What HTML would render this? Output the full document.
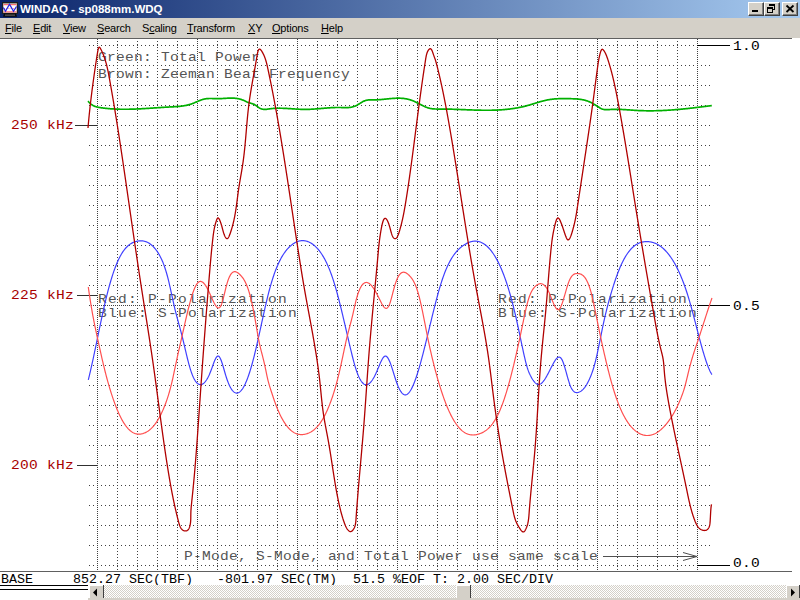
<!DOCTYPE html>
<html><head><meta charset="utf-8">
<style>
html,body{margin:0;padding:0;width:800px;height:600px;overflow:hidden;background:#fff;}
body{position:relative;font-family:"Liberation Sans",sans-serif;}
#title{position:absolute;left:0;top:0;width:800px;height:18px;background:linear-gradient(to right,#0a246a,#a6caf0);}
#title .t{position:absolute;left:20px;top:2px;color:#fff;font-weight:bold;font-size:11.5px;line-height:14px;white-space:nowrap;}
.btn{position:absolute;top:2px;width:16px;height:14px;background:#d4d0c8;box-sizing:border-box;border-top:1px solid #fff;border-left:1px solid #fff;border-right:1px solid #404040;border-bottom:1px solid #404040;box-shadow:inset -1px -1px 0 #808080;}
#menu{position:absolute;left:0;top:18px;width:800px;height:20px;background:#d4d0c8;}
#menu span{position:absolute;top:4px;font-size:11px;line-height:13px;color:#000;white-space:nowrap;letter-spacing:-0.2px;}
#menu u{text-decoration:underline;text-underline-offset:1px;text-decoration-thickness:1px;}
svg{position:absolute;left:0;top:0;}
</style></head><body>
<div id="title">
<svg width="20" height="18" style="left:0;top:0"><rect x="2" y="2" width="16" height="12" fill="#202020"/><rect x="3" y="3" width="14" height="10" fill="#8a8878"/><rect x="3.5" y="3.8" width="13" height="8.7" fill="#fff"/><path d="M3.5 4.6H16.5M3.5 11.9H16.5" stroke="#ff7070" stroke-width="1.1"/><path d="M4 8.5H16" stroke="#ff8080" stroke-dasharray="1 1.2"/><polyline points="3.3,7.5 5.5,11.3 9.5,4.2 13.5,11.3 16.5,6.5" fill="none" stroke="#2828e8" stroke-width="1.3"/><path d="M3 16.8L4 13.5H16L17 16.8Z" fill="#080808"/><rect x="5" y="14.6" width="10" height="1" fill="#707070"/></svg>
<div class="t">WINDAQ - sp088mm.WDQ</div>
<div class="btn" style="left:748px"></div>
<div class="btn" style="left:764px"></div>
<div class="btn" style="left:782px"></div>
<svg width="800" height="18" style="left:0;top:0">
<rect x="752" y="10" width="6" height="2" fill="#000"/>
<g shape-rendering="crispEdges" fill="#000">
<rect x="769" y="4" width="6" height="2"/><rect x="774" y="4" width="1" height="6"/><rect x="773" y="9" width="2" height="1"/>
<rect x="767" y="7" width="6" height="2"/><rect x="767" y="7" width="1" height="6"/><rect x="772" y="7" width="1" height="6"/><rect x="767" y="12" width="6" height="1"/>
</g>
<path d="M786.5 5.5L793.5 12M793.5 5.5L786.5 12" stroke="#000" stroke-width="1.8"/>
</svg>
</div>
<div id="menu">
<span style="left:5px"><u>F</u>ile</span>
<span style="left:33px"><u>E</u>dit</span>
<span style="left:63px"><u>V</u>iew</span>
<span style="left:97px"><u>S</u>earch</span>
<span style="left:142px">S<u>c</u>aling</span>
<span style="left:187px"><u>T</u>ransform</span>
<span style="left:248px"><u>X</u>Y</span>
<span style="left:272px"><u>O</u>ptions</span>
<span style="left:321px"><u>H</u>elp</span>
</div>
<svg width="800" height="600" style="left:0;top:0" shape-rendering="crispEdges">
<rect x="0" y="38" width="792" height="1" fill="#606060"/>
<path d="M89 45.5H711 M89 65.5H711 M89 85.5H711 M89 105.5H711 M89 125.5H711 M89 145.5H711 M89 165.5H711 M89 185.5H711 M89 205.5H711 M89 225.5H711 M89 245.5H711 M89 265.5H711 M89 285.5H711 M89 325.5H711 M89 345.5H711 M89 365.5H711 M89 385.5H711 M89 405.5H711 M89 425.5H711 M89 445.5H711 M89 465.5H711 M89 485.5H711 M89 505.5H711 M89 525.5H711 M89 545.5H711 M89 565.5H711" stroke="#404040" stroke-width="1" stroke-dasharray="1 3" fill="none"/>
<path d="M89 305.5H697" stroke="#404040" stroke-width="1" stroke-dasharray="1 1" fill="none"/>
<path d="M97.5 39V571 M197.5 39V571 M297.5 39V571 M397.5 39V571 M497.5 39V571 M597.5 39V571 M697.5 39V571" stroke="#404040" stroke-width="1" stroke-dasharray="1 1" fill="none"/>
<path d="M117.5 41V571 M137.5 41V571 M157.5 41V571 M177.5 41V571 M217.5 41V571 M237.5 41V571 M257.5 41V571 M277.5 41V571 M317.5 41V571 M337.5 41V571 M357.5 41V571 M377.5 41V571 M417.5 41V571 M437.5 41V571 M457.5 41V571 M477.5 41V571 M517.5 41V571 M537.5 41V571 M557.5 41V571 M577.5 41V571 M617.5 41V571 M637.5 41V571 M657.5 41V571 M677.5 41V571" stroke="#404040" stroke-width="1" stroke-dasharray="1 2" fill="none"/>
<rect x="0" y="571" width="792" height="1" fill="#606060"/>
</svg>
<svg width="800" height="600" style="left:0;top:0">
<g font-family="Liberation Mono"><text transform="translate(98,61) scale(1.12,1)" font-size="13" letter-spacing="0.236" fill="#555555" xml:space="preserve">Green: Total Power</text>
<text transform="translate(98,78) scale(1.12,1)" font-size="13" letter-spacing="0.236" fill="#555555" xml:space="preserve">Brown: Zeeman Beat Frequency</text>
<text transform="translate(98,303) scale(1.12,1)" font-size="13" letter-spacing="1.129" fill="#555555" xml:space="preserve">Red: P-Polarization</text>
<text transform="translate(98,317) scale(1.12,1)" font-size="13" letter-spacing="1.129" fill="#555555" xml:space="preserve">Blue: S-Polarization</text>
<text transform="translate(498,303) scale(1.12,1)" font-size="13" letter-spacing="1.129" fill="#555555" xml:space="preserve">Red: P-Polarization</text>
<text transform="translate(498,317) scale(1.12,1)" font-size="13" letter-spacing="1.129" fill="#555555" xml:space="preserve">Blue: S-Polarization</text>
<text transform="translate(184,560) scale(1.12,1)" font-size="13" letter-spacing="0.236" fill="#555555" xml:space="preserve">P-Mode, S-Mode, and Total Power use same scale</text>
<text transform="translate(11,129) scale(1.12,1)" font-size="13" letter-spacing="0.236" fill="#a80000" xml:space="preserve">250 kHz</text>
<text transform="translate(11,299) scale(1.12,1)" font-size="13" letter-spacing="0.236" fill="#a80000" xml:space="preserve">225 kHz</text>
<text transform="translate(11,469) scale(1.12,1)" font-size="13" letter-spacing="0.236" fill="#a80000" xml:space="preserve">200 kHz</text>
<text transform="translate(733,50) scale(1.12,1)" font-size="13" letter-spacing="0.236" fill="#000" xml:space="preserve">1.0</text>
<text transform="translate(733,310) scale(1.12,1)" font-size="13" letter-spacing="0.236" fill="#000" xml:space="preserve">0.5</text>
<text transform="translate(733,567) scale(1.12,1)" font-size="13" letter-spacing="0.236" fill="#000" xml:space="preserve">0.0</text></g>
<g shape-rendering="crispEdges">
<rect x="75" y="125" width="22" height="1" fill="#303030"/>
<rect x="77" y="295" width="20" height="1" fill="#303030"/>
<rect x="77" y="465" width="20" height="1" fill="#303030"/>
<rect x="697" y="45" width="33" height="1" fill="#000"/>
<rect x="697" y="305" width="33" height="1" fill="#000"/>
<rect x="697" y="565" width="33" height="1" fill="#000"/>
<rect x="603" y="556" width="94" height="1" fill="#505050"/>
</g>
<path d="M683 552.5L697 556.5L683 560.5" stroke="#505050" fill="none"/>
<polyline points="88.00,101.14 88.50,101.72 89.00,102.25 89.50,102.76 90.00,103.22 90.50,103.66 91.00,104.07 91.50,104.44 92.00,104.79 92.50,105.11 93.00,105.40 93.50,105.67 94.00,105.92 94.50,106.14 95.00,106.35 95.50,106.53 96.00,106.70 96.50,106.85 97.00,106.99 97.50,107.12 98.00,107.23 98.50,107.34 99.00,107.43 99.50,107.52 100.00,107.60 100.50,107.67 101.00,107.75 101.50,107.82 102.00,107.89 102.50,107.95 103.00,108.02 103.50,108.08 104.00,108.14 104.50,108.20 105.00,108.26 105.50,108.31 106.00,108.37 106.50,108.42 107.00,108.47 107.50,108.52 108.00,108.57 108.50,108.61 109.00,108.66 109.50,108.70 110.00,108.74 110.50,108.78 111.00,108.81 111.50,108.85 112.00,108.88 112.50,108.91 113.00,108.95 113.50,108.97 114.00,109.00 114.50,109.03 115.00,109.05 115.50,109.08 116.00,109.10 116.50,109.12 117.00,109.14 117.50,109.16 118.00,109.17 118.50,109.19 119.00,109.20 119.50,109.21 120.00,109.23 120.50,109.24 121.00,109.24 121.50,109.25 122.00,109.26 122.50,109.26 123.00,109.27 123.50,109.27 124.00,109.27 124.50,109.27 125.00,109.27 125.50,109.27 126.00,109.27 126.50,109.26 127.00,109.26 127.50,109.25 128.00,109.25 128.50,109.24 129.00,109.23 129.50,109.22 130.00,109.21 130.50,109.20 131.00,109.19 131.50,109.17 132.00,109.16 132.50,109.14 133.00,109.13 133.50,109.11 134.00,109.09 134.50,109.08 135.00,109.06 135.50,109.04 136.00,109.02 136.50,109.00 137.00,108.97 137.50,108.95 138.00,108.93 138.50,108.91 139.00,108.88 139.50,108.86 140.00,108.83 140.50,108.81 141.00,108.78 141.50,108.75 142.00,108.72 142.50,108.70 143.00,108.67 143.50,108.64 144.00,108.61 144.50,108.58 145.00,108.55 145.50,108.52 146.00,108.49 146.50,108.46 147.00,108.43 147.50,108.40 148.00,108.36 148.50,108.33 149.00,108.30 149.50,108.27 150.00,108.23 150.50,108.20 151.00,108.17 151.50,108.13 152.00,108.10 152.50,108.07 153.00,108.03 153.50,108.00 154.00,107.97 154.50,107.93 155.00,107.90 155.50,107.86 156.00,107.83 156.50,107.80 157.00,107.76 157.50,107.73 158.00,107.70 158.50,107.66 159.00,107.63 159.50,107.60 160.00,107.56 160.50,107.53 161.00,107.50 161.50,107.46 162.00,107.43 162.50,107.40 163.00,107.37 163.50,107.34 164.00,107.30 164.50,107.27 165.00,107.24 165.50,107.21 166.00,107.18 166.50,107.15 167.00,107.12 167.50,107.10 168.00,107.07 168.50,107.04 169.00,107.01 169.50,106.99 170.00,106.96 170.50,106.93 171.00,106.91 171.50,106.88 172.00,106.86 172.50,106.83 173.00,106.81 173.50,106.78 174.00,106.75 174.50,106.72 175.00,106.69 175.50,106.66 176.00,106.63 176.50,106.60 177.00,106.56 177.50,106.53 178.00,106.49 178.50,106.44 179.00,106.40 179.50,106.35 180.00,106.30 180.50,106.25 181.00,106.19 181.50,106.13 182.00,106.07 182.50,106.00 183.00,105.93 183.50,105.85 184.00,105.77 184.50,105.69 185.00,105.60 185.50,105.50 186.00,105.40 186.50,105.30 187.00,105.19 187.50,105.07 188.00,104.95 188.50,104.82 189.00,104.69 189.50,104.55 190.00,104.40 190.50,104.24 191.00,104.08 191.50,103.92 192.00,103.74 192.50,103.56 193.00,103.37 193.50,103.17 194.00,102.97 194.50,102.76 195.00,102.55 195.50,102.33 196.00,102.12 196.50,101.90 197.00,101.68 197.50,101.46 198.00,101.25 198.50,101.03 199.00,100.82 199.50,100.62 200.00,100.42 200.50,100.22 201.00,100.04 201.50,99.86 202.00,99.69 202.50,99.53 203.00,99.38 203.50,99.24 204.00,99.12 204.50,99.01 205.00,98.91 205.50,98.82 206.00,98.75 206.50,98.68 207.00,98.63 207.50,98.59 208.00,98.55 208.50,98.53 209.00,98.51 209.50,98.50 210.00,98.49 210.50,98.49 211.00,98.49 211.50,98.50 212.00,98.51 212.50,98.53 213.00,98.55 213.50,98.56 214.00,98.58 214.50,98.60 215.00,98.62 215.50,98.64 216.00,98.65 216.50,98.66 217.00,98.67 217.50,98.68 218.00,98.68 218.50,98.67 219.00,98.66 219.50,98.65 220.00,98.63 220.50,98.61 221.00,98.59 221.50,98.57 222.00,98.54 222.50,98.51 223.00,98.49 223.50,98.45 224.00,98.42 224.50,98.39 225.00,98.36 225.50,98.33 226.00,98.30 226.50,98.27 227.00,98.24 227.50,98.22 228.00,98.19 228.50,98.17 229.00,98.15 229.50,98.14 230.00,98.12 230.50,98.12 231.00,98.11 231.50,98.11 232.00,98.12 232.50,98.13 233.00,98.14 233.50,98.16 234.00,98.19 234.50,98.22 235.00,98.26 235.50,98.31 236.00,98.37 236.50,98.43 237.00,98.50 237.50,98.58 238.00,98.67 238.50,98.77 239.00,98.88 239.50,98.99 240.00,99.12 240.50,99.26 241.00,99.41 241.50,99.57 242.00,99.74 242.50,99.93 243.00,100.12 243.50,100.33 244.00,100.55 244.50,100.79 245.00,101.03 245.50,101.28 246.00,101.52 246.50,101.76 247.00,101.99 247.50,102.20 248.00,102.39 248.50,102.57 249.00,102.73 249.50,102.88 250.00,103.02 250.50,103.16 251.00,103.31 251.50,103.45 252.00,103.60 252.50,103.77 253.00,103.95 253.50,104.15 254.00,104.37 254.50,104.61 255.00,104.89 255.50,105.20 256.00,105.53 256.50,105.88 257.00,106.24 257.50,106.61 258.00,106.98 258.50,107.33 259.00,107.67 259.50,107.98 260.00,108.27 260.50,108.52 261.00,108.73 261.50,108.90 262.00,109.05 262.50,109.17 263.00,109.25 263.50,109.32 264.00,109.36 264.50,109.38 265.00,109.38 265.50,109.36 266.00,109.33 266.50,109.29 267.00,109.23 267.50,109.17 268.00,109.10 268.50,109.03 269.00,108.96 269.50,108.88 270.00,108.81 270.50,108.75 271.00,108.68 271.50,108.63 272.00,108.57 272.50,108.52 273.00,108.48 273.50,108.44 274.00,108.40 274.50,108.37 275.00,108.34 275.50,108.31 276.00,108.29 276.50,108.27 277.00,108.26 277.50,108.24 278.00,108.23 278.50,108.23 279.00,108.22 279.50,108.22 280.00,108.22 280.50,108.23 281.00,108.23 281.50,108.24 282.00,108.25 282.50,108.27 283.00,108.28 283.50,108.30 284.00,108.32 284.50,108.34 285.00,108.36 285.50,108.39 286.00,108.41 286.50,108.44 287.00,108.47 287.50,108.50 288.00,108.53 288.50,108.56 289.00,108.59 289.50,108.62 290.00,108.65 290.50,108.69 291.00,108.72 291.50,108.75 292.00,108.79 292.50,108.82 293.00,108.86 293.50,108.89 294.00,108.93 294.50,108.96 295.00,108.99 295.50,109.02 296.00,109.06 296.50,109.09 297.00,109.12 297.50,109.15 298.00,109.17 298.50,109.20 299.00,109.23 299.50,109.25 300.00,109.27 300.50,109.29 301.00,109.31 301.50,109.33 302.00,109.35 302.50,109.36 303.00,109.37 303.50,109.38 304.00,109.39 304.50,109.39 305.00,109.40 305.50,109.39 306.00,109.39 306.50,109.39 307.00,109.38 307.50,109.37 308.00,109.36 308.50,109.34 309.00,109.32 309.50,109.30 310.00,109.28 310.50,109.26 311.00,109.24 311.50,109.21 312.00,109.18 312.50,109.15 313.00,109.12 313.50,109.09 314.00,109.06 314.50,109.02 315.00,108.99 315.50,108.95 316.00,108.91 316.50,108.87 317.00,108.83 317.50,108.79 318.00,108.75 318.50,108.71 319.00,108.67 319.50,108.63 320.00,108.58 320.50,108.54 321.00,108.50 321.50,108.46 322.00,108.41 322.50,108.37 323.00,108.33 323.50,108.28 324.00,108.24 324.50,108.20 325.00,108.16 325.50,108.11 326.00,108.07 326.50,108.03 327.00,107.99 327.50,107.96 328.00,107.92 328.50,107.88 329.00,107.85 329.50,107.81 330.00,107.78 330.50,107.75 331.00,107.72 331.50,107.69 332.00,107.66 332.50,107.64 333.00,107.61 333.50,107.59 334.00,107.57 334.50,107.55 335.00,107.53 335.50,107.52 336.00,107.51 336.50,107.50 337.00,107.49 337.50,107.49 338.00,107.48 338.50,107.48 339.00,107.49 339.50,107.49 340.00,107.50 340.50,107.51 341.00,107.52 341.50,107.54 342.00,107.55 342.50,107.57 343.00,107.59 343.50,107.60 344.00,107.61 344.50,107.62 345.00,107.63 345.50,107.63 346.00,107.63 346.50,107.63 347.00,107.61 347.50,107.60 348.00,107.57 348.50,107.54 349.00,107.50 349.50,107.44 350.00,107.38 350.50,107.31 351.00,107.23 351.50,107.14 352.00,107.03 352.50,106.91 353.00,106.78 353.50,106.63 354.00,106.47 354.50,106.29 355.00,106.09 355.50,105.88 356.00,105.65 356.50,105.40 357.00,105.14 357.50,104.86 358.00,104.57 358.50,104.27 359.00,103.97 359.50,103.66 360.00,103.35 360.50,103.04 361.00,102.74 361.50,102.44 362.00,102.14 362.50,101.86 363.00,101.59 363.50,101.34 364.00,101.10 364.50,100.89 365.00,100.69 365.50,100.52 366.00,100.38 366.50,100.25 367.00,100.15 367.50,100.06 368.00,99.99 368.50,99.94 369.00,99.90 369.50,99.87 370.00,99.85 370.50,99.84 371.00,99.83 371.50,99.84 372.00,99.84 372.50,99.85 373.00,99.86 373.50,99.86 374.00,99.87 374.50,99.87 375.00,99.86 375.50,99.86 376.00,99.84 376.50,99.83 377.00,99.81 377.50,99.79 378.00,99.76 378.50,99.73 379.00,99.70 379.50,99.66 380.00,99.63 380.50,99.59 381.00,99.55 381.50,99.50 382.00,99.46 382.50,99.41 383.00,99.36 383.50,99.32 384.00,99.27 384.50,99.22 385.00,99.16 385.50,99.11 386.00,99.06 386.50,99.01 387.00,98.96 387.50,98.90 388.00,98.85 388.50,98.80 389.00,98.75 389.50,98.70 390.00,98.65 390.50,98.61 391.00,98.56 391.50,98.52 392.00,98.48 392.50,98.44 393.00,98.40 393.50,98.37 394.00,98.33 394.50,98.30 395.00,98.28 395.50,98.26 396.00,98.24 396.50,98.22 397.00,98.21 397.50,98.20 398.00,98.19 398.50,98.19 399.00,98.20 399.50,98.20 400.00,98.22 400.50,98.24 401.00,98.26 401.50,98.29 402.00,98.32 402.50,98.36 403.00,98.41 403.50,98.46 404.00,98.52 404.50,98.58 405.00,98.65 405.50,98.73 406.00,98.82 406.50,98.91 407.00,99.01 407.50,99.11 408.00,99.23 408.50,99.35 409.00,99.48 409.50,99.62 410.00,99.77 410.50,99.92 411.00,100.09 411.50,100.26 412.00,100.44 412.50,100.63 413.00,100.83 413.50,101.04 414.00,101.26 414.50,101.49 415.00,101.72 415.50,101.96 416.00,102.20 416.50,102.45 417.00,102.70 417.50,102.95 418.00,103.21 418.50,103.47 419.00,103.73 419.50,103.99 420.00,104.26 420.50,104.52 421.00,104.77 421.50,105.03 422.00,105.28 422.50,105.53 423.00,105.78 423.50,106.02 424.00,106.26 424.50,106.48 425.00,106.71 425.50,106.92 426.00,107.13 426.50,107.32 427.00,107.51 427.50,107.69 428.00,107.85 428.50,108.00 429.00,108.14 429.50,108.27 430.00,108.39 430.50,108.49 431.00,108.58 431.50,108.66 432.00,108.73 432.50,108.79 433.00,108.85 433.50,108.89 434.00,108.93 434.50,108.96 435.00,108.98 435.50,109.00 436.00,109.02 436.50,109.03 437.00,109.03 437.50,109.03 438.00,109.03 438.50,109.03 439.00,109.03 439.50,109.03 440.00,109.03 440.50,109.03 441.00,109.03 441.50,109.03 442.00,109.03 442.50,109.03 443.00,109.03 443.50,109.04 444.00,109.04 444.50,109.05 445.00,109.06 445.50,109.06 446.00,109.07 446.50,109.08 447.00,109.09 447.50,109.10 448.00,109.11 448.50,109.12 449.00,109.13 449.50,109.14 450.00,109.16 450.50,109.17 451.00,109.18 451.50,109.20 452.00,109.21 452.50,109.23 453.00,109.24 453.50,109.26 454.00,109.28 454.50,109.29 455.00,109.31 455.50,109.33 456.00,109.34 456.50,109.36 457.00,109.38 457.50,109.40 458.00,109.42 458.50,109.44 459.00,109.46 459.50,109.48 460.00,109.50 460.50,109.52 461.00,109.54 461.50,109.56 462.00,109.58 462.50,109.60 463.00,109.62 463.50,109.64 464.00,109.66 464.50,109.68 465.00,109.70 465.50,109.72 466.00,109.74 466.50,109.76 467.00,109.78 467.50,109.80 468.00,109.82 468.50,109.84 469.00,109.86 469.50,109.88 470.00,109.90 470.50,109.92 471.00,109.94 471.50,109.95 472.00,109.97 472.50,109.99 473.00,110.01 473.50,110.02 474.00,110.04 474.50,110.06 475.00,110.07 475.50,110.09 476.00,110.10 476.50,110.12 477.00,110.13 477.50,110.14 478.00,110.16 478.50,110.17 479.00,110.18 479.50,110.19 480.00,110.20 480.50,110.21 481.00,110.22 481.50,110.23 482.00,110.24 482.50,110.25 483.00,110.25 483.50,110.26 484.00,110.26 484.50,110.27 485.00,110.27 485.50,110.27 486.00,110.27 486.50,110.27 487.00,110.27 487.50,110.27 488.00,110.27 488.50,110.27 489.00,110.27 489.50,110.26 490.00,110.25 490.50,110.25 491.00,110.24 491.50,110.23 492.00,110.22 492.50,110.21 493.00,110.20 493.50,110.18 494.00,110.17 494.50,110.15 495.00,110.14 495.50,110.12 496.00,110.10 496.50,110.08 497.00,110.06 497.50,110.03 498.00,110.01 498.50,109.98 499.00,109.96 499.50,109.93 500.00,109.90 500.50,109.87 501.00,109.83 501.50,109.80 502.00,109.77 502.50,109.73 503.00,109.69 503.50,109.65 504.00,109.61 504.50,109.56 505.00,109.52 505.50,109.47 506.00,109.43 506.50,109.38 507.00,109.32 507.50,109.27 508.00,109.22 508.50,109.16 509.00,109.10 509.50,109.04 510.00,108.98 510.50,108.92 511.00,108.85 511.50,108.78 512.00,108.71 512.50,108.64 513.00,108.57 513.50,108.50 514.00,108.42 514.50,108.34 515.00,108.26 515.50,108.18 516.00,108.09 516.50,108.01 517.00,107.92 517.50,107.83 518.00,107.73 518.50,107.64 519.00,107.54 519.50,107.44 520.00,107.34 520.50,107.24 521.00,107.13 521.50,107.02 522.00,106.91 522.50,106.80 523.00,106.69 523.50,106.57 524.00,106.45 524.50,106.33 525.00,106.20 525.50,106.08 526.00,105.95 526.50,105.82 527.00,105.68 527.50,105.55 528.00,105.41 528.50,105.27 529.00,105.12 529.50,104.98 530.00,104.83 530.50,104.68 531.00,104.53 531.50,104.38 532.00,104.23 532.50,104.08 533.00,103.92 533.50,103.77 534.00,103.61 534.50,103.46 535.00,103.30 535.50,103.15 536.00,103.00 536.50,102.84 537.00,102.69 537.50,102.54 538.00,102.38 538.50,102.23 539.00,102.08 539.50,101.94 540.00,101.79 540.50,101.65 541.00,101.51 541.50,101.37 542.00,101.23 542.50,101.09 543.00,100.96 543.50,100.83 544.00,100.71 544.50,100.59 545.00,100.47 545.50,100.35 546.00,100.24 546.50,100.13 547.00,100.03 547.50,99.93 548.00,99.84 548.50,99.75 549.00,99.66 549.50,99.58 550.00,99.50 550.50,99.43 551.00,99.36 551.50,99.29 552.00,99.23 552.50,99.17 553.00,99.12 553.50,99.07 554.00,99.02 554.50,98.97 555.00,98.93 555.50,98.89 556.00,98.86 556.50,98.83 557.00,98.80 557.50,98.77 558.00,98.75 558.50,98.72 559.00,98.70 559.50,98.69 560.00,98.67 560.50,98.66 561.00,98.65 561.50,98.64 562.00,98.63 562.50,98.63 563.00,98.63 563.50,98.62 564.00,98.62 564.50,98.63 565.00,98.63 565.50,98.63 566.00,98.64 566.50,98.64 567.00,98.65 567.50,98.66 568.00,98.66 568.50,98.67 569.00,98.68 569.50,98.69 570.00,98.70 570.50,98.71 571.00,98.72 571.50,98.73 572.00,98.75 572.50,98.76 573.00,98.78 573.50,98.79 574.00,98.81 574.50,98.83 575.00,98.86 575.50,98.89 576.00,98.92 576.50,98.95 577.00,98.99 577.50,99.03 578.00,99.07 578.50,99.12 579.00,99.18 579.50,99.24 580.00,99.30 580.50,99.37 581.00,99.45 581.50,99.53 582.00,99.61 582.50,99.71 583.00,99.81 583.50,99.92 584.00,100.03 584.50,100.16 585.00,100.29 585.50,100.43 586.00,100.57 586.50,100.73 587.00,100.89 587.50,101.07 588.00,101.25 588.50,101.44 589.00,101.64 589.50,101.86 590.00,102.08 590.50,102.31 591.00,102.55 591.50,102.81 592.00,103.07 592.50,103.34 593.00,103.62 593.50,103.90 594.00,104.19 594.50,104.49 595.00,104.79 595.50,105.10 596.00,105.41 596.50,105.73 597.00,106.05 597.50,106.37 598.00,106.69 598.50,107.01 599.00,107.33 599.50,107.64 600.00,107.93 600.50,108.21 601.00,108.48 601.50,108.72 602.00,108.94 602.50,109.13 603.00,109.29 603.50,109.42 604.00,109.52 604.50,109.60 605.00,109.66 605.50,109.69 606.00,109.71 606.50,109.72 607.00,109.71 607.50,109.69 608.00,109.66 608.50,109.63 609.00,109.60 609.50,109.56 610.00,109.52 610.50,109.49 611.00,109.46 611.50,109.43 612.00,109.41 612.50,109.39 613.00,109.37 613.50,109.36 614.00,109.35 614.50,109.34 615.00,109.33 615.50,109.33 616.00,109.33 616.50,109.33 617.00,109.33 617.50,109.34 618.00,109.35 618.50,109.36 619.00,109.37 619.50,109.39 620.00,109.40 620.50,109.42 621.00,109.44 621.50,109.46 622.00,109.48 622.50,109.51 623.00,109.53 623.50,109.56 624.00,109.59 624.50,109.62 625.00,109.65 625.50,109.68 626.00,109.71 626.50,109.74 627.00,109.78 627.50,109.81 628.00,109.84 628.50,109.88 629.00,109.91 629.50,109.95 630.00,109.98 630.50,110.02 631.00,110.06 631.50,110.09 632.00,110.13 632.50,110.16 633.00,110.20 633.50,110.23 634.00,110.26 634.50,110.30 635.00,110.33 635.50,110.36 636.00,110.39 636.50,110.42 637.00,110.45 637.50,110.48 638.00,110.50 638.50,110.53 639.00,110.55 639.50,110.58 640.00,110.60 640.50,110.62 641.00,110.64 641.50,110.66 642.00,110.67 642.50,110.69 643.00,110.70 643.50,110.72 644.00,110.73 644.50,110.74 645.00,110.75 645.50,110.76 646.00,110.77 646.50,110.78 647.00,110.79 647.50,110.79 648.00,110.80 648.50,110.80 649.00,110.80 649.50,110.80 650.00,110.80 650.50,110.80 651.00,110.80 651.50,110.80 652.00,110.80 652.50,110.79 653.00,110.79 653.50,110.78 654.00,110.77 654.50,110.76 655.00,110.75 655.50,110.74 656.00,110.73 656.50,110.72 657.00,110.71 657.50,110.69 658.00,110.68 658.50,110.66 659.00,110.65 659.50,110.63 660.00,110.61 660.50,110.59 661.00,110.57 661.50,110.55 662.00,110.53 662.50,110.51 663.00,110.49 663.50,110.46 664.00,110.44 664.50,110.41 665.00,110.39 665.50,110.36 666.00,110.33 666.50,110.30 667.00,110.27 667.50,110.24 668.00,110.21 668.50,110.18 669.00,110.15 669.50,110.12 670.00,110.08 670.50,110.05 671.00,110.01 671.50,109.98 672.00,109.94 672.50,109.91 673.00,109.87 673.50,109.83 674.00,109.79 674.50,109.75 675.00,109.71 675.50,109.67 676.00,109.63 676.50,109.59 677.00,109.55 677.50,109.50 678.00,109.46 678.50,109.42 679.00,109.37 679.50,109.33 680.00,109.28 680.50,109.23 681.00,109.19 681.50,109.14 682.00,109.09 682.50,109.04 683.00,108.99 683.50,108.94 684.00,108.89 684.50,108.84 685.00,108.79 685.50,108.74 686.00,108.69 686.50,108.64 687.00,108.58 687.50,108.53 688.00,108.48 688.50,108.42 689.00,108.37 689.50,108.32 690.00,108.26 690.50,108.20 691.00,108.15 691.50,108.09 692.00,108.04 692.50,107.98 693.00,107.92 693.50,107.86 694.00,107.81 694.50,107.75 695.00,107.69 695.50,107.63 696.00,107.57 696.50,107.51 697.00,107.45 697.50,107.39 698.00,107.33 698.50,107.27 699.00,107.21 699.50,107.15 700.00,107.09 700.50,107.03 701.00,106.96 701.50,106.90 702.00,106.84 702.50,106.78 703.00,106.71 703.50,106.65 704.00,106.59 704.50,106.53 705.00,106.46 705.50,106.40 706.00,106.33 706.50,106.27 707.00,106.21 707.50,106.14 708.00,106.08 708.50,106.01 709.00,105.95 709.50,105.89 710.00,105.82 710.50,105.76 711.00,105.69 711.50,105.63 711.80,105.59" fill="none" stroke="#00b000" stroke-width="1.7" stroke-linejoin="round"/>
<polyline points="88.30,379.86 88.80,377.84 89.30,375.77 89.80,373.66 90.30,371.52 90.80,369.34 91.30,367.13 91.80,364.89 92.30,362.62 92.80,360.32 93.30,358.01 93.80,355.67 94.30,353.32 94.80,350.95 95.30,348.56 95.80,346.17 96.30,343.77 96.80,341.36 97.30,338.95 97.80,336.53 98.30,334.12 98.80,331.71 99.30,329.31 99.80,326.91 100.30,324.53 100.80,322.16 101.30,319.80 101.80,317.46 102.30,315.14 102.80,312.85 103.30,310.58 103.80,308.33 104.30,306.12 104.80,303.94 105.30,301.79 105.80,299.68 106.30,297.61 106.80,295.57 107.30,293.58 107.80,291.63 108.30,289.72 108.80,287.85 109.30,286.02 109.80,284.23 110.30,282.48 110.80,280.77 111.30,279.11 111.80,277.48 112.30,275.89 112.80,274.35 113.30,272.84 113.80,271.38 114.30,269.96 114.80,268.58 115.30,267.24 115.80,265.94 116.30,264.68 116.80,263.47 117.30,262.29 117.80,261.16 118.30,260.07 118.80,259.02 119.30,258.00 119.80,257.02 120.30,256.09 120.80,255.18 121.30,254.32 121.80,253.49 122.30,252.69 122.80,251.93 123.30,251.20 123.80,250.50 124.30,249.83 124.80,249.20 125.30,248.59 125.80,248.02 126.30,247.47 126.80,246.95 127.30,246.46 127.80,245.99 128.30,245.55 128.80,245.14 129.30,244.75 129.80,244.38 130.30,244.03 130.80,243.71 131.30,243.41 131.80,243.13 132.30,242.87 132.80,242.63 133.30,242.40 133.80,242.20 134.30,242.01 134.80,241.83 135.30,241.67 135.80,241.53 136.30,241.40 136.80,241.29 137.30,241.18 137.80,241.09 138.30,241.01 138.80,240.95 139.30,240.90 139.80,240.86 140.30,240.84 140.80,240.83 141.30,240.83 141.80,240.86 142.30,240.90 142.80,240.95 143.30,241.03 143.80,241.12 144.30,241.22 144.80,241.35 145.30,241.49 145.80,241.66 146.30,241.84 146.80,242.05 147.30,242.27 147.80,242.51 148.30,242.78 148.80,243.07 149.30,243.37 149.80,243.71 150.30,244.06 150.80,244.44 151.30,244.84 151.80,245.26 152.30,245.71 152.80,246.19 153.30,246.69 153.80,247.21 154.30,247.76 154.80,248.34 155.30,248.95 155.80,249.58 156.30,250.24 156.80,250.93 157.30,251.64 157.80,252.39 158.30,253.17 158.80,253.99 159.30,254.84 159.80,255.74 160.30,256.67 160.80,257.66 161.30,258.69 161.80,259.77 162.30,260.91 162.80,262.10 163.30,263.35 163.80,264.66 164.30,266.04 164.80,267.48 165.30,268.99 165.80,270.58 166.30,272.23 166.80,273.97 167.30,275.78 167.80,277.67 168.30,279.65 168.80,281.71 169.30,283.84 169.80,286.02 170.30,288.24 170.80,290.51 171.30,292.79 171.80,295.09 172.30,297.39 172.80,299.68 173.30,301.95 173.80,304.18 174.30,306.38 174.80,308.52 175.30,310.59 175.80,312.61 176.30,314.56 176.80,316.47 177.30,318.35 177.80,320.19 178.30,322.02 178.80,323.83 179.30,325.64 179.80,327.46 180.30,329.29 180.80,331.15 181.30,333.05 181.80,334.98 182.30,336.97 182.80,339.00 183.30,341.07 183.80,343.18 184.30,345.31 184.80,347.44 185.30,349.58 185.80,351.72 186.30,353.84 186.80,355.93 187.30,357.99 187.80,360.01 188.30,361.97 188.80,363.87 189.30,365.70 189.80,367.45 190.30,369.11 190.80,370.68 191.30,372.16 191.80,373.54 192.30,374.84 192.80,376.05 193.30,377.17 193.80,378.21 194.30,379.16 194.80,380.04 195.30,380.83 195.80,381.54 196.30,382.17 196.80,382.73 197.30,383.21 197.80,383.62 198.30,383.95 198.80,384.22 199.30,384.41 199.80,384.53 200.30,384.59 200.80,384.58 201.30,384.50 201.80,384.36 202.30,384.16 202.80,383.89 203.30,383.56 203.80,383.17 204.30,382.71 204.80,382.18 205.30,381.60 205.80,380.95 206.30,380.24 206.80,379.47 207.30,378.63 207.80,377.73 208.30,376.77 208.80,375.75 209.30,374.67 209.80,373.52 210.30,372.32 210.80,371.05 211.30,369.72 211.80,368.35 212.30,366.94 212.80,365.54 213.30,364.15 213.80,362.80 214.30,361.51 214.80,360.31 215.30,359.21 215.80,358.23 216.30,357.41 216.80,356.75 217.30,356.29 217.80,356.04 218.30,356.03 218.80,356.27 219.30,356.76 219.80,357.49 220.30,358.42 220.80,359.53 221.30,360.80 221.80,362.21 222.30,363.73 222.80,365.35 223.30,367.03 223.80,368.75 224.30,370.50 224.80,372.24 225.30,373.96 225.80,375.63 226.30,377.22 226.80,378.74 227.30,380.18 227.80,381.54 228.30,382.82 228.80,384.02 229.30,385.14 229.80,386.19 230.30,387.16 230.80,388.05 231.30,388.87 231.80,389.61 232.30,390.28 232.80,390.88 233.30,391.40 233.80,391.86 234.30,392.24 234.80,392.55 235.30,392.78 235.80,392.95 236.30,393.05 236.80,393.08 237.30,393.05 237.80,392.94 238.30,392.77 238.80,392.53 239.30,392.23 239.80,391.86 240.30,391.42 240.80,390.93 241.30,390.37 241.80,389.74 242.30,389.06 242.80,388.31 243.30,387.50 243.80,386.64 244.30,385.71 244.80,384.72 245.30,383.68 245.80,382.57 246.30,381.41 246.80,380.19 247.30,378.92 247.80,377.59 248.30,376.21 248.80,374.77 249.30,373.28 249.80,371.73 250.30,370.13 250.80,368.48 251.30,366.78 251.80,365.03 252.30,363.23 252.80,361.37 253.30,359.47 253.80,357.53 254.30,355.53 254.80,353.50 255.30,351.43 255.80,349.33 256.30,347.19 256.80,345.02 257.30,342.83 257.80,340.62 258.30,338.38 258.80,336.13 259.30,333.86 259.80,331.59 260.30,329.30 260.80,327.01 261.30,324.72 261.80,322.43 262.30,320.15 262.80,317.87 263.30,315.60 263.80,313.35 264.30,311.11 264.80,308.89 265.30,306.69 265.80,304.52 266.30,302.37 266.80,300.26 267.30,298.18 267.80,296.14 268.30,294.14 268.80,292.18 269.30,290.27 269.80,288.41 270.30,286.60 270.80,284.84 271.30,283.12 271.80,281.46 272.30,279.84 272.80,278.26 273.30,276.73 273.80,275.25 274.30,273.81 274.80,272.41 275.30,271.06 275.80,269.75 276.30,268.47 276.80,267.24 277.30,266.04 277.80,264.89 278.30,263.77 278.80,262.69 279.30,261.64 279.80,260.63 280.30,259.66 280.80,258.71 281.30,257.80 281.80,256.92 282.30,256.08 282.80,255.26 283.30,254.47 283.80,253.71 284.30,252.98 284.80,252.28 285.30,251.60 285.80,250.95 286.30,250.33 286.80,249.72 287.30,249.14 287.80,248.59 288.30,248.05 288.80,247.54 289.30,247.05 289.80,246.57 290.30,246.12 290.80,245.68 291.30,245.26 291.80,244.86 292.30,244.47 292.80,244.11 293.30,243.76 293.80,243.43 294.30,243.12 294.80,242.83 295.30,242.56 295.80,242.30 296.30,242.06 296.80,241.84 297.30,241.64 297.80,241.46 298.30,241.29 298.80,241.15 299.30,241.02 299.80,240.91 300.30,240.81 300.80,240.74 301.30,240.68 301.80,240.64 302.30,240.62 302.80,240.62 303.30,240.63 303.80,240.67 304.30,240.72 304.80,240.79 305.30,240.87 305.80,240.98 306.30,241.10 306.80,241.24 307.30,241.40 307.80,241.57 308.30,241.77 308.80,241.98 309.30,242.21 309.80,242.46 310.30,242.72 310.80,243.01 311.30,243.31 311.80,243.62 312.30,243.96 312.80,244.32 313.30,244.69 313.80,245.08 314.30,245.49 314.80,245.91 315.30,246.36 315.80,246.83 316.30,247.32 316.80,247.83 317.30,248.36 317.80,248.91 318.30,249.49 318.80,250.09 319.30,250.72 319.80,251.37 320.30,252.04 320.80,252.74 321.30,253.47 321.80,254.22 322.30,255.00 322.80,255.81 323.30,256.64 323.80,257.51 324.30,258.40 324.80,259.33 325.30,260.28 325.80,261.27 326.30,262.29 326.80,263.34 327.30,264.42 327.80,265.54 328.30,266.69 328.80,267.87 329.30,269.09 329.80,270.34 330.30,271.63 330.80,272.96 331.30,274.33 331.80,275.73 332.30,277.17 332.80,278.64 333.30,280.16 333.80,281.72 334.30,283.32 334.80,284.95 335.30,286.63 335.80,288.35 336.30,290.11 336.80,291.91 337.30,293.74 337.80,295.60 338.30,297.50 338.80,299.42 339.30,301.37 339.80,303.35 340.30,305.36 340.80,307.38 341.30,309.43 341.80,311.49 342.30,313.58 342.80,315.68 343.30,317.79 343.80,319.91 344.30,322.04 344.80,324.19 345.30,326.33 345.80,328.49 346.30,330.64 346.80,332.80 347.30,334.95 347.80,337.11 348.30,339.25 348.80,341.40 349.30,343.53 349.80,345.65 350.30,347.77 350.80,349.86 351.30,351.94 351.80,353.99 352.30,356.00 352.80,357.98 353.30,359.91 353.80,361.79 354.30,363.61 354.80,365.37 355.30,367.07 355.80,368.69 356.30,370.23 356.80,371.69 357.30,373.07 357.80,374.36 358.30,375.58 358.80,376.72 359.30,377.78 359.80,378.77 360.30,379.67 360.80,380.50 361.30,381.25 361.80,381.93 362.30,382.54 362.80,383.06 363.30,383.52 363.80,383.90 364.30,384.21 364.80,384.45 365.30,384.62 365.80,384.71 366.30,384.74 366.80,384.70 367.30,384.58 367.80,384.41 368.30,384.16 368.80,383.86 369.30,383.49 369.80,383.06 370.30,382.57 370.80,382.02 371.30,381.42 371.80,380.76 372.30,380.04 372.80,379.28 373.30,378.46 373.80,377.60 374.30,376.69 374.80,375.73 375.30,374.72 375.80,373.68 376.30,372.59 376.80,371.46 377.30,370.29 377.80,369.09 378.30,367.87 378.80,366.65 379.30,365.44 379.80,364.24 380.30,363.08 380.80,361.96 381.30,360.90 381.80,359.92 382.30,359.01 382.80,358.21 383.30,357.51 383.80,356.93 384.30,356.49 384.80,356.20 385.30,356.07 385.80,356.10 386.30,356.31 386.80,356.69 387.30,357.21 387.80,357.89 388.30,358.69 388.80,359.62 389.30,360.67 389.80,361.82 390.30,363.07 390.80,364.41 391.30,365.83 391.80,367.32 392.30,368.86 392.80,370.45 393.30,372.07 393.80,373.71 394.30,375.34 394.80,376.96 395.30,378.55 395.80,380.08 396.30,381.55 396.80,382.96 397.30,384.28 397.80,385.54 398.30,386.72 398.80,387.82 399.30,388.85 399.80,389.80 400.30,390.68 400.80,391.47 401.30,392.18 401.80,392.82 402.30,393.37 402.80,393.83 403.30,394.22 403.80,394.52 404.30,394.73 404.80,394.86 405.30,394.89 405.80,394.85 406.30,394.71 406.80,394.49 407.30,394.20 407.80,393.82 408.30,393.36 408.80,392.83 409.30,392.22 409.80,391.54 410.30,390.79 410.80,389.98 411.30,389.09 411.80,388.14 412.30,387.13 412.80,386.05 413.30,384.92 413.80,383.73 414.30,382.48 414.80,381.18 415.30,379.83 415.80,378.43 416.30,376.97 416.80,375.48 417.30,373.93 417.80,372.35 418.30,370.72 418.80,369.06 419.30,367.36 419.80,365.62 420.30,363.85 420.80,362.04 421.30,360.21 421.80,358.35 422.30,356.46 422.80,354.55 423.30,352.61 423.80,350.66 424.30,348.68 424.80,346.69 425.30,344.69 425.80,342.67 426.30,340.63 426.80,338.59 427.30,336.54 427.80,334.48 428.30,332.42 428.80,330.35 429.30,328.28 429.80,326.22 430.30,324.15 430.80,322.09 431.30,320.03 431.80,317.98 432.30,315.93 432.80,313.90 433.30,311.88 433.80,309.87 434.30,307.88 434.80,305.91 435.30,303.95 435.80,302.02 436.30,300.11 436.80,298.22 437.30,296.35 437.80,294.52 438.30,292.71 438.80,290.93 439.30,289.19 439.80,287.48 440.30,285.80 440.80,284.17 441.30,282.57 441.80,281.01 442.30,279.50 442.80,278.03 443.30,276.60 443.80,275.21 444.30,273.87 444.80,272.56 445.30,271.29 445.80,270.06 446.30,268.87 446.80,267.72 447.30,266.60 447.80,265.52 448.30,264.47 448.80,263.46 449.30,262.48 449.80,261.53 450.30,260.61 450.80,259.73 451.30,258.87 451.80,258.05 452.30,257.25 452.80,256.48 453.30,255.74 453.80,255.02 454.30,254.33 454.80,253.67 455.30,253.03 455.80,252.41 456.30,251.82 456.80,251.25 457.30,250.70 457.80,250.17 458.30,249.66 458.80,249.17 459.30,248.70 459.80,248.24 460.30,247.80 460.80,247.38 461.30,246.98 461.80,246.58 462.30,246.21 462.80,245.84 463.30,245.49 463.80,245.15 464.30,244.82 464.80,244.51 465.30,244.20 465.80,243.91 466.30,243.64 466.80,243.38 467.30,243.13 467.80,242.89 468.30,242.67 468.80,242.46 469.30,242.27 469.80,242.09 470.30,241.93 470.80,241.78 471.30,241.64 471.80,241.53 472.30,241.42 472.80,241.34 473.30,241.27 473.80,241.21 474.30,241.17 474.80,241.15 475.30,241.14 475.80,241.16 476.30,241.18 476.80,241.23 477.30,241.29 477.80,241.37 478.30,241.47 478.80,241.59 479.30,241.73 479.80,241.88 480.30,242.05 480.80,242.24 481.30,242.45 481.80,242.68 482.30,242.93 482.80,243.20 483.30,243.49 483.80,243.80 484.30,244.13 484.80,244.47 485.30,244.84 485.80,245.23 486.30,245.65 486.80,246.08 487.30,246.53 487.80,247.01 488.30,247.50 488.80,248.02 489.30,248.57 489.80,249.13 490.30,249.72 490.80,250.32 491.30,250.96 491.80,251.61 492.30,252.29 492.80,252.99 493.30,253.72 493.80,254.47 494.30,255.24 494.80,256.04 495.30,256.86 495.80,257.71 496.30,258.59 496.80,259.49 497.30,260.41 497.80,261.36 498.30,262.34 498.80,263.35 499.30,264.39 499.80,265.45 500.30,266.54 500.80,267.67 501.30,268.82 501.80,270.00 502.30,271.21 502.80,272.45 503.30,273.72 503.80,275.03 504.30,276.37 504.80,277.73 505.30,279.13 505.80,280.57 506.30,282.04 506.80,283.54 507.30,285.07 507.80,286.64 508.30,288.25 508.80,289.89 509.30,291.56 509.80,293.27 510.30,295.02 510.80,296.80 511.30,298.62 511.80,300.48 512.30,302.37 512.80,304.30 513.30,306.26 513.80,308.27 514.30,310.30 514.80,312.38 515.30,314.49 515.80,316.65 516.30,318.83 516.80,321.06 517.30,323.32 517.80,325.62 518.30,327.95 518.80,330.30 519.30,332.67 519.80,335.05 520.30,337.43 520.80,339.82 521.30,342.19 521.80,344.56 522.30,346.91 522.80,349.24 523.30,351.54 523.80,353.80 524.30,356.02 524.80,358.19 525.30,360.29 525.80,362.31 526.30,364.23 526.80,366.02 527.30,367.69 527.80,369.23 528.30,370.64 528.80,371.94 529.30,373.15 529.80,374.27 530.30,375.32 530.80,376.30 531.30,377.23 531.80,378.12 532.30,378.96 532.80,379.74 533.30,380.47 533.80,381.15 534.30,381.77 534.80,382.33 535.30,382.83 535.80,383.27 536.30,383.64 536.80,383.95 537.30,384.18 537.80,384.35 538.30,384.44 538.80,384.46 539.30,384.41 539.80,384.27 540.30,384.06 540.80,383.77 541.30,383.42 541.80,383.00 542.30,382.52 542.80,381.97 543.30,381.38 543.80,380.73 544.30,380.03 544.80,379.29 545.30,378.52 545.80,377.70 546.30,376.85 546.80,375.97 547.30,375.07 547.80,374.14 548.30,373.20 548.80,372.24 549.30,371.27 549.80,370.29 550.30,369.31 550.80,368.33 551.30,367.35 551.80,366.38 552.30,365.42 552.80,364.48 553.30,363.55 553.80,362.65 554.30,361.78 554.80,360.96 555.30,360.19 555.80,359.49 556.30,358.86 556.80,358.31 557.30,357.85 557.80,357.49 558.30,357.24 558.80,357.11 559.30,357.11 559.80,357.25 560.30,357.53 560.80,357.97 561.30,358.58 561.80,359.36 562.30,360.33 562.80,361.47 563.30,362.77 563.80,364.20 564.30,365.75 564.80,367.39 565.30,369.11 565.80,370.88 566.30,372.68 566.80,374.49 567.30,376.29 567.80,378.06 568.30,379.78 568.80,381.43 569.30,382.98 569.80,384.43 570.30,385.74 570.80,386.91 571.30,387.95 571.80,388.87 572.30,389.67 572.80,390.36 573.30,390.94 573.80,391.42 574.30,391.81 574.80,392.12 575.30,392.35 575.80,392.50 576.30,392.59 576.80,392.61 577.30,392.59 577.80,392.51 578.30,392.40 578.80,392.24 579.30,392.05 579.80,391.82 580.30,391.55 580.80,391.24 581.30,390.90 581.80,390.50 582.30,390.07 582.80,389.60 583.30,389.08 583.80,388.52 584.30,387.92 584.80,387.28 585.30,386.59 585.80,385.85 586.30,385.07 586.80,384.25 587.30,383.38 587.80,382.46 588.30,381.50 588.80,380.49 589.30,379.43 589.80,378.32 590.30,377.17 590.80,375.96 591.30,374.70 591.80,373.37 592.30,371.97 592.80,370.50 593.30,368.95 593.80,367.32 594.30,365.59 594.80,363.77 595.30,361.85 595.80,359.83 596.30,357.72 596.80,355.53 597.30,353.27 597.80,350.95 598.30,348.59 598.80,346.17 599.30,343.73 599.80,341.26 600.30,338.78 600.80,336.30 601.30,333.82 601.80,331.35 602.30,328.91 602.80,326.50 603.30,324.13 603.80,321.82 604.30,319.56 604.80,317.35 605.30,315.19 605.80,313.08 606.30,311.02 606.80,309.00 607.30,307.03 607.80,305.10 608.30,303.20 608.80,301.35 609.30,299.53 609.80,297.75 610.30,296.00 610.80,294.29 611.30,292.60 611.80,290.94 612.30,289.30 612.80,287.69 613.30,286.10 613.80,284.54 614.30,283.00 614.80,281.49 615.30,280.01 615.80,278.55 616.30,277.13 616.80,275.73 617.30,274.36 617.80,273.03 618.30,271.72 618.80,270.45 619.30,269.21 619.80,268.01 620.30,266.84 620.80,265.70 621.30,264.60 621.80,263.53 622.30,262.49 622.80,261.48 623.30,260.50 623.80,259.55 624.30,258.63 624.80,257.75 625.30,256.89 625.80,256.06 626.30,255.26 626.80,254.48 627.30,253.74 627.80,253.02 628.30,252.32 628.80,251.66 629.30,251.02 629.80,250.40 630.30,249.81 630.80,249.25 631.30,248.70 631.80,248.19 632.30,247.69 632.80,247.22 633.30,246.77 633.80,246.34 634.30,245.94 634.80,245.55 635.30,245.19 635.80,244.85 636.30,244.52 636.80,244.22 637.30,243.94 637.80,243.67 638.30,243.42 638.80,243.19 639.30,242.98 639.80,242.79 640.30,242.61 640.80,242.45 641.30,242.30 641.80,242.17 642.30,242.05 642.80,241.95 643.30,241.86 643.80,241.79 644.30,241.73 644.80,241.68 645.30,241.64 645.80,241.62 646.30,241.60 646.80,241.60 647.30,241.61 647.80,241.63 648.30,241.66 648.80,241.71 649.30,241.76 649.80,241.82 650.30,241.90 650.80,241.99 651.30,242.09 651.80,242.20 652.30,242.32 652.80,242.46 653.30,242.61 653.80,242.77 654.30,242.95 654.80,243.13 655.30,243.34 655.80,243.55 656.30,243.78 656.80,244.02 657.30,244.28 657.80,244.55 658.30,244.84 658.80,245.14 659.30,245.46 659.80,245.79 660.30,246.13 660.80,246.50 661.30,246.87 661.80,247.27 662.30,247.67 662.80,248.10 663.30,248.54 663.80,249.00 664.30,249.48 664.80,249.97 665.30,250.48 665.80,251.00 666.30,251.55 666.80,252.11 667.30,252.69 667.80,253.29 668.30,253.90 668.80,254.54 669.30,255.19 669.80,255.86 670.30,256.55 670.80,257.26 671.30,257.99 671.80,258.74 672.30,259.51 672.80,260.30 673.30,261.11 673.80,261.94 674.30,262.79 674.80,263.66 675.30,264.55 675.80,265.47 676.30,266.41 676.80,267.38 677.30,268.36 677.80,269.38 678.30,270.41 678.80,271.48 679.30,272.56 679.80,273.68 680.30,274.82 680.80,275.98 681.30,277.18 681.80,278.40 682.30,279.65 682.80,280.93 683.30,282.23 683.80,283.57 684.30,284.94 684.80,286.33 685.30,287.76 685.80,289.22 686.30,290.71 686.80,292.23 687.30,293.78 687.80,295.37 688.30,296.99 688.80,298.64 689.30,300.33 689.80,302.05 690.30,303.80 690.80,305.58 691.30,307.38 691.80,309.21 692.30,311.06 692.80,312.92 693.30,314.81 693.80,316.70 694.30,318.61 694.80,320.53 695.30,322.45 695.80,324.38 696.30,326.31 696.80,328.24 697.30,330.17 697.80,332.10 698.30,334.01 698.80,335.92 699.30,337.81 699.80,339.69 700.30,341.56 700.80,343.40 701.30,345.22 701.80,347.02 702.30,348.79 702.80,350.54 703.30,352.25 703.80,353.93 704.30,355.57 704.80,357.18 705.30,358.75 705.80,360.27 706.30,361.75 706.80,363.18 707.30,364.56 707.80,365.89 708.30,367.17 708.80,368.38 709.30,369.54 709.80,370.64 710.30,371.67 710.80,372.64 711.30,373.54 711.80,374.37 712.00,374.68" fill="none" stroke="#4040ff" stroke-width="1.2" stroke-linejoin="round"/>
<polyline points="88.30,287.02 88.80,290.63 89.30,294.10 89.80,297.45 90.30,300.68 90.80,303.79 91.30,306.80 91.80,309.71 92.30,312.53 92.80,315.27 93.30,317.93 93.80,320.52 94.30,323.04 94.80,325.52 95.30,327.94 95.80,330.33 96.30,332.68 96.80,335.00 97.30,337.31 97.80,339.60 98.30,341.89 98.80,344.17 99.30,346.44 99.80,348.71 100.30,350.95 100.80,353.19 101.30,355.40 101.80,357.60 102.30,359.77 102.80,361.92 103.30,364.04 103.80,366.14 104.30,368.21 104.80,370.24 105.30,372.24 105.80,374.20 106.30,376.12 106.80,378.00 107.30,379.85 107.80,381.66 108.30,383.43 108.80,385.16 109.30,386.86 109.80,388.53 110.30,390.16 110.80,391.76 111.30,393.33 111.80,394.87 112.30,396.38 112.80,397.86 113.30,399.32 113.80,400.74 114.30,402.14 114.80,403.51 115.30,404.85 115.80,406.16 116.30,407.44 116.80,408.69 117.30,409.91 117.80,411.10 118.30,412.26 118.80,413.39 119.30,414.49 119.80,415.55 120.30,416.59 120.80,417.59 121.30,418.55 121.80,419.49 122.30,420.39 122.80,421.26 123.30,422.10 123.80,422.91 124.30,423.68 124.80,424.43 125.30,425.14 125.80,425.83 126.30,426.48 126.80,427.11 127.30,427.71 127.80,428.27 128.30,428.81 128.80,429.32 129.30,429.81 129.80,430.26 130.30,430.69 130.80,431.09 131.30,431.47 131.80,431.82 132.30,432.14 132.80,432.44 133.30,432.71 133.80,432.96 134.30,433.19 134.80,433.39 135.30,433.56 135.80,433.71 136.30,433.84 136.80,433.95 137.30,434.04 137.80,434.10 138.30,434.14 138.80,434.16 139.30,434.16 139.80,434.14 140.30,434.09 140.80,434.03 141.30,433.95 141.80,433.85 142.30,433.73 142.80,433.59 143.30,433.43 143.80,433.26 144.30,433.06 144.80,432.85 145.30,432.63 145.80,432.38 146.30,432.12 146.80,431.84 147.30,431.54 147.80,431.22 148.30,430.88 148.80,430.53 149.30,430.15 149.80,429.75 150.30,429.33 150.80,428.88 151.30,428.42 151.80,427.93 152.30,427.42 152.80,426.88 153.30,426.32 153.80,425.74 154.30,425.13 154.80,424.49 155.30,423.83 155.80,423.14 156.30,422.42 156.80,421.67 157.30,420.90 157.80,420.10 158.30,419.26 158.80,418.40 159.30,417.51 159.80,416.59 160.30,415.63 160.80,414.65 161.30,413.63 161.80,412.58 162.30,411.49 162.80,410.37 163.30,409.22 163.80,408.03 164.30,406.81 164.80,405.55 165.30,404.26 165.80,402.92 166.30,401.55 166.80,400.13 167.30,398.66 167.80,397.13 168.30,395.56 168.80,393.92 169.30,392.22 169.80,390.45 170.30,388.62 170.80,386.71 171.30,384.72 171.80,382.66 172.30,380.51 172.80,378.28 173.30,375.97 173.80,373.61 174.30,371.22 174.80,368.83 175.30,366.46 175.80,364.12 176.30,361.80 176.80,359.50 177.30,357.23 177.80,354.97 178.30,352.72 178.80,350.49 179.30,348.26 179.80,346.05 180.30,343.83 180.80,341.62 181.30,339.41 181.80,337.19 182.30,334.96 182.80,332.73 183.30,330.50 183.80,328.27 184.30,326.05 184.80,323.84 185.30,321.64 185.80,319.47 186.30,317.31 186.80,315.18 187.30,313.08 187.80,311.01 188.30,308.98 188.80,306.99 189.30,305.05 189.80,303.16 190.30,301.32 190.80,299.53 191.30,297.81 191.80,296.16 192.30,294.57 192.80,293.06 193.30,291.62 193.80,290.26 194.30,288.99 194.80,287.81 195.30,286.72 195.80,285.72 196.30,284.83 196.80,284.04 197.30,283.36 197.80,282.79 198.30,282.32 198.80,281.95 199.30,281.68 199.80,281.51 200.30,281.43 200.80,281.44 201.30,281.54 201.80,281.72 202.30,281.98 202.80,282.32 203.30,282.73 203.80,283.22 204.30,283.78 204.80,284.40 205.30,285.08 205.80,285.82 206.30,286.62 206.80,287.48 207.30,288.38 207.80,289.33 208.30,290.33 208.80,291.37 209.30,292.44 209.80,293.54 210.30,294.66 210.80,295.79 211.30,296.92 211.80,298.05 212.30,299.16 212.80,300.24 213.30,301.29 213.80,302.31 214.30,303.27 214.80,304.18 215.30,305.02 215.80,305.78 216.30,306.46 216.80,307.03 217.30,307.49 217.80,307.80 218.30,307.97 218.80,307.96 219.30,307.76 219.80,307.36 220.30,306.74 220.80,305.89 221.30,304.78 221.80,303.43 222.30,301.88 222.80,300.16 223.30,298.30 223.80,296.34 224.30,294.31 224.80,292.24 225.30,290.18 225.80,288.15 226.30,286.19 226.80,284.33 227.30,282.60 227.80,281.02 228.30,279.59 228.80,278.29 229.30,277.13 229.80,276.09 230.30,275.18 230.80,274.38 231.30,273.69 231.80,273.12 232.30,272.64 232.80,272.27 233.30,271.98 233.80,271.79 234.30,271.68 234.80,271.64 235.30,271.68 235.80,271.79 236.30,271.96 236.80,272.19 237.30,272.47 237.80,272.80 238.30,273.17 238.80,273.59 239.30,274.03 239.80,274.51 240.30,275.00 240.80,275.53 241.30,276.08 241.80,276.67 242.30,277.29 242.80,277.96 243.30,278.67 243.80,279.44 244.30,280.27 244.80,281.16 245.30,282.11 245.80,283.14 246.30,284.25 246.80,285.43 247.30,286.71 247.80,288.07 248.30,289.53 248.80,291.09 249.30,292.75 249.80,294.52 250.30,296.40 250.80,298.37 251.30,300.45 251.80,302.62 252.30,304.89 252.80,307.25 253.30,309.71 253.80,312.25 254.30,314.88 254.80,317.60 255.30,320.40 255.80,323.29 256.30,326.25 256.80,329.25 257.30,332.22 257.80,335.10 258.30,337.82 258.80,340.37 259.30,342.77 259.80,345.04 260.30,347.20 260.80,349.27 261.30,351.28 261.80,353.24 262.30,355.19 262.80,357.14 263.30,359.12 263.80,361.15 264.30,363.26 264.80,365.47 265.30,367.80 265.80,370.23 266.30,372.69 266.80,375.11 267.30,377.44 267.80,379.61 268.30,381.61 268.80,383.46 269.30,385.19 269.80,386.84 270.30,388.42 270.80,389.96 271.30,391.49 271.80,393.02 272.30,394.54 272.80,396.05 273.30,397.54 273.80,399.01 274.30,400.46 274.80,401.88 275.30,403.26 275.80,404.61 276.30,405.92 276.80,407.19 277.30,408.44 277.80,409.64 278.30,410.82 278.80,411.96 279.30,413.06 279.80,414.13 280.30,415.18 280.80,416.19 281.30,417.16 281.80,418.11 282.30,419.02 282.80,419.91 283.30,420.76 283.80,421.59 284.30,422.38 284.80,423.15 285.30,423.89 285.80,424.60 286.30,425.28 286.80,425.94 287.30,426.56 287.80,427.17 288.30,427.74 288.80,428.29 289.30,428.81 289.80,429.31 290.30,429.78 290.80,430.23 291.30,430.65 291.80,431.05 292.30,431.43 292.80,431.78 293.30,432.11 293.80,432.42 294.30,432.71 294.80,432.97 295.30,433.21 295.80,433.44 296.30,433.64 296.80,433.82 297.30,433.98 297.80,434.12 298.30,434.24 298.80,434.35 299.30,434.43 299.80,434.50 300.30,434.55 300.80,434.58 301.30,434.59 301.80,434.59 302.30,434.57 302.80,434.54 303.30,434.49 303.80,434.42 304.30,434.34 304.80,434.24 305.30,434.14 305.80,434.01 306.30,433.88 306.80,433.73 307.30,433.56 307.80,433.38 308.30,433.19 308.80,432.98 309.30,432.75 309.80,432.51 310.30,432.25 310.80,431.98 311.30,431.69 311.80,431.37 312.30,431.04 312.80,430.69 313.30,430.32 313.80,429.94 314.30,429.53 314.80,429.09 315.30,428.64 315.80,428.17 316.30,427.67 316.80,427.15 317.30,426.61 317.80,426.04 318.30,425.45 318.80,424.84 319.30,424.20 319.80,423.53 320.30,422.84 320.80,422.12 321.30,421.37 321.80,420.60 322.30,419.80 322.80,418.97 323.30,418.11 323.80,417.22 324.30,416.30 324.80,415.36 325.30,414.38 325.80,413.37 326.30,412.33 326.80,411.25 327.30,410.15 327.80,409.01 328.30,407.83 328.80,406.63 329.30,405.39 329.80,404.11 330.30,402.80 330.80,401.45 331.30,400.07 331.80,398.65 332.30,397.19 332.80,395.70 333.30,394.16 333.80,392.59 334.30,390.97 334.80,389.31 335.30,387.61 335.80,385.86 336.30,384.06 336.80,382.22 337.30,380.33 337.80,378.39 338.30,376.40 338.80,374.35 339.30,372.25 339.80,370.10 340.30,367.89 340.80,365.63 341.30,363.33 341.80,361.00 342.30,358.64 342.80,356.27 343.30,353.90 343.80,351.53 344.30,349.18 344.80,346.85 345.30,344.56 345.80,342.30 346.30,340.10 346.80,337.96 347.30,335.89 347.80,333.89 348.30,331.94 348.80,330.03 349.30,328.15 349.80,326.28 350.30,324.40 350.80,322.52 351.30,320.61 351.80,318.65 352.30,316.65 352.80,314.57 353.30,312.42 353.80,310.21 354.30,307.96 354.80,305.73 355.30,303.54 355.80,301.44 356.30,299.45 356.80,297.60 357.30,295.87 357.80,294.27 358.30,292.79 358.80,291.43 359.30,290.18 359.80,289.04 360.30,288.01 360.80,287.07 361.30,286.23 361.80,285.49 362.30,284.84 362.80,284.27 363.30,283.79 363.80,283.38 364.30,283.05 364.80,282.80 365.30,282.62 365.80,282.51 366.30,282.47 366.80,282.50 367.30,282.59 367.80,282.74 368.30,282.96 368.80,283.23 369.30,283.56 369.80,283.95 370.30,284.38 370.80,284.87 371.30,285.40 371.80,285.98 372.30,286.61 372.80,287.27 373.30,287.98 373.80,288.72 374.30,289.50 374.80,290.31 375.30,291.15 375.80,292.03 376.30,292.93 376.80,293.85 377.30,294.80 377.80,295.77 378.30,296.76 378.80,297.76 379.30,298.78 379.80,299.80 380.30,300.82 380.80,301.83 381.30,302.80 381.80,303.73 382.30,304.61 382.80,305.43 383.30,306.17 383.80,306.82 384.30,307.37 384.80,307.81 385.30,308.12 385.80,308.30 386.30,308.33 386.80,308.21 387.30,307.91 387.80,307.42 388.30,306.75 388.80,305.86 389.30,304.76 389.80,303.45 390.30,301.97 390.80,300.33 391.30,298.58 391.80,296.75 392.30,294.85 392.80,292.92 393.30,290.99 393.80,289.09 394.30,287.25 394.80,285.49 395.30,283.85 395.80,282.34 396.30,280.94 396.80,279.67 397.30,278.51 397.80,277.46 398.30,276.52 398.80,275.69 399.30,274.95 399.80,274.31 400.30,273.76 400.80,273.31 401.30,272.93 401.80,272.64 402.30,272.43 402.80,272.29 403.30,272.22 403.80,272.22 404.30,272.28 404.80,272.40 405.30,272.57 405.80,272.80 406.30,273.08 406.80,273.40 407.30,273.76 407.80,274.15 408.30,274.59 408.80,275.05 409.30,275.53 409.80,276.05 410.30,276.59 410.80,277.18 411.30,277.80 411.80,278.47 412.30,279.19 412.80,279.97 413.30,280.81 413.80,281.71 414.30,282.69 414.80,283.73 415.30,284.86 415.80,286.07 416.30,287.37 416.80,288.76 417.30,290.25 417.80,291.84 418.30,293.54 418.80,295.35 419.30,297.26 419.80,299.25 420.30,301.34 420.80,303.50 421.30,305.74 421.80,308.04 422.30,310.41 422.80,312.82 423.30,315.29 423.80,317.80 424.30,320.34 424.80,322.91 425.30,325.48 425.80,328.06 426.30,330.62 426.80,333.16 427.30,335.66 427.80,338.11 428.30,340.53 428.80,342.90 429.30,345.23 429.80,347.52 430.30,349.77 430.80,351.98 431.30,354.15 431.80,356.29 432.30,358.39 432.80,360.45 433.30,362.48 433.80,364.47 434.30,366.43 434.80,368.36 435.30,370.26 435.80,372.13 436.30,373.96 436.80,375.77 437.30,377.55 437.80,379.30 438.30,381.02 438.80,382.71 439.30,384.37 439.80,386.01 440.30,387.62 440.80,389.19 441.30,390.75 441.80,392.27 442.30,393.76 442.80,395.23 443.30,396.67 443.80,398.08 444.30,399.46 444.80,400.81 445.30,402.14 445.80,403.44 446.30,404.71 446.80,405.95 447.30,407.16 447.80,408.35 448.30,409.50 448.80,410.63 449.30,411.73 449.80,412.81 450.30,413.85 450.80,414.87 451.30,415.86 451.80,416.82 452.30,417.76 452.80,418.66 453.30,419.54 453.80,420.39 454.30,421.22 454.80,422.01 455.30,422.78 455.80,423.52 456.30,424.24 456.80,424.92 457.30,425.59 457.80,426.22 458.30,426.83 458.80,427.42 459.30,427.98 459.80,428.52 460.30,429.03 460.80,429.52 461.30,429.99 461.80,430.43 462.30,430.85 462.80,431.25 463.30,431.63 463.80,431.98 464.30,432.31 464.80,432.62 465.30,432.91 465.80,433.18 466.30,433.43 466.80,433.66 467.30,433.87 467.80,434.06 468.30,434.23 468.80,434.39 469.30,434.52 469.80,434.64 470.30,434.74 470.80,434.82 471.30,434.88 471.80,434.93 472.30,434.96 472.80,434.98 473.30,434.98 473.80,434.96 474.30,434.93 474.80,434.88 475.30,434.82 475.80,434.75 476.30,434.66 476.80,434.56 477.30,434.44 477.80,434.32 478.30,434.17 478.80,434.02 479.30,433.86 479.80,433.68 480.30,433.49 480.80,433.29 481.30,433.08 481.80,432.86 482.30,432.62 482.80,432.37 483.30,432.10 483.80,431.82 484.30,431.52 484.80,431.20 485.30,430.87 485.80,430.52 486.30,430.15 486.80,429.76 487.30,429.35 487.80,428.92 488.30,428.47 488.80,427.99 489.30,427.50 489.80,426.98 490.30,426.43 490.80,425.87 491.30,425.27 491.80,424.65 492.30,424.01 492.80,423.33 493.30,422.63 493.80,421.90 494.30,421.14 494.80,420.35 495.30,419.53 495.80,418.68 496.30,417.80 496.80,416.88 497.30,415.93 497.80,414.95 498.30,413.93 498.80,412.88 499.30,411.79 499.80,410.67 500.30,409.51 500.80,408.31 501.30,407.07 501.80,405.79 502.30,404.48 502.80,403.12 503.30,401.72 503.80,400.29 504.30,398.82 504.80,397.31 505.30,395.77 505.80,394.19 506.30,392.57 506.80,390.92 507.30,389.24 507.80,387.52 508.30,385.77 508.80,383.99 509.30,382.17 509.80,380.33 510.30,378.46 510.80,376.55 511.30,374.62 511.80,372.66 512.30,370.68 512.80,368.66 513.30,366.62 513.80,364.56 514.30,362.47 514.80,360.35 515.30,358.21 515.80,356.05 516.30,353.87 516.80,351.66 517.30,349.44 517.80,347.19 518.30,344.92 518.80,342.64 519.30,340.33 519.80,338.01 520.30,335.67 520.80,333.32 521.30,330.95 521.80,328.56 522.30,326.16 522.80,323.74 523.30,321.32 523.80,318.91 524.30,316.52 524.80,314.17 525.30,311.86 525.80,309.62 526.30,307.45 526.80,305.37 527.30,303.40 527.80,301.54 528.30,299.82 528.80,298.22 529.30,296.76 529.80,295.41 530.30,294.17 530.80,293.03 531.30,292.00 531.80,291.05 532.30,290.19 532.80,289.40 533.30,288.69 533.80,288.03 534.30,287.44 534.80,286.89 535.30,286.38 535.80,285.91 536.30,285.49 536.80,285.10 537.30,284.76 537.80,284.47 538.30,284.22 538.80,284.02 539.30,283.86 539.80,283.76 540.30,283.71 540.80,283.71 541.30,283.76 541.80,283.87 542.30,284.04 542.80,284.27 543.30,284.55 543.80,284.89 544.30,285.30 544.80,285.77 545.30,286.30 545.80,286.90 546.30,287.56 546.80,288.29 547.30,289.10 547.80,289.97 548.30,290.91 548.80,291.93 549.30,293.02 549.80,294.18 550.30,295.39 550.80,296.63 551.30,297.90 551.80,299.17 552.30,300.44 552.80,301.68 553.30,302.89 553.80,304.05 554.30,305.13 554.80,306.14 555.30,307.05 555.80,307.85 556.30,308.52 556.80,309.05 557.30,309.43 557.80,309.64 558.30,309.66 558.80,309.48 559.30,309.09 559.80,308.49 560.30,307.69 560.80,306.73 561.30,305.60 561.80,304.34 562.30,302.95 562.80,301.46 563.30,299.88 563.80,298.24 564.30,296.54 564.80,294.81 565.30,293.06 565.80,291.32 566.30,289.59 566.80,287.90 567.30,286.27 567.80,284.70 568.30,283.23 568.80,281.86 569.30,280.61 569.80,279.50 570.30,278.50 570.80,277.62 571.30,276.85 571.80,276.17 572.30,275.60 572.80,275.10 573.30,274.69 573.80,274.36 574.30,274.09 574.80,273.88 575.30,273.72 575.80,273.62 576.30,273.55 576.80,273.52 577.30,273.51 577.80,273.53 578.30,273.56 578.80,273.62 579.30,273.71 579.80,273.82 580.30,273.97 580.80,274.16 581.30,274.39 581.80,274.67 582.30,274.99 582.80,275.37 583.30,275.80 583.80,276.29 584.30,276.85 584.80,277.47 585.30,278.16 585.80,278.92 586.30,279.76 586.80,280.69 587.30,281.69 587.80,282.79 588.30,283.98 588.80,285.26 589.30,286.64 589.80,288.12 590.30,289.71 590.80,291.41 591.30,293.22 591.80,295.15 592.30,297.20 592.80,299.36 593.30,301.61 593.80,303.95 594.30,306.34 594.80,308.78 595.30,311.25 595.80,313.73 596.30,316.21 596.80,318.68 597.30,321.13 597.80,323.57 598.30,326.00 598.80,328.41 599.30,330.81 599.80,333.19 600.30,335.55 600.80,337.90 601.30,340.23 601.80,342.54 602.30,344.83 602.80,347.09 603.30,349.34 603.80,351.57 604.30,353.77 604.80,355.95 605.30,358.11 605.80,360.24 606.30,362.35 606.80,364.42 607.30,366.48 607.80,368.50 608.30,370.50 608.80,372.46 609.30,374.40 609.80,376.30 610.30,378.18 610.80,380.02 611.30,381.83 611.80,383.60 612.30,385.34 612.80,387.05 613.30,388.72 613.80,390.35 614.30,391.95 614.80,393.51 615.30,395.03 615.80,396.51 616.30,397.96 616.80,399.37 617.30,400.75 617.80,402.09 618.30,403.40 618.80,404.68 619.30,405.92 619.80,407.13 620.30,408.30 620.80,409.44 621.30,410.56 621.80,411.64 622.30,412.69 622.80,413.71 623.30,414.70 623.80,415.66 624.30,416.59 624.80,417.50 625.30,418.37 625.80,419.22 626.30,420.04 626.80,420.84 627.30,421.61 627.80,422.35 628.30,423.07 628.80,423.76 629.30,424.43 629.80,425.08 630.30,425.70 630.80,426.30 631.30,426.87 631.80,427.43 632.30,427.96 632.80,428.47 633.30,428.96 633.80,429.43 634.30,429.88 634.80,430.31 635.30,430.73 635.80,431.12 636.30,431.50 636.80,431.85 637.30,432.20 637.80,432.52 638.30,432.83 638.80,433.12 639.30,433.39 639.80,433.65 640.30,433.89 640.80,434.11 641.30,434.32 641.80,434.51 642.30,434.68 642.80,434.84 643.30,434.98 643.80,435.11 644.30,435.21 644.80,435.30 645.30,435.38 645.80,435.44 646.30,435.48 646.80,435.50 647.30,435.51 647.80,435.51 648.30,435.48 648.80,435.44 649.30,435.39 649.80,435.31 650.30,435.23 650.80,435.12 651.30,435.00 651.80,434.86 652.30,434.71 652.80,434.54 653.30,434.36 653.80,434.16 654.30,433.94 654.80,433.71 655.30,433.46 655.80,433.20 656.30,432.92 656.80,432.62 657.30,432.31 657.80,431.98 658.30,431.64 658.80,431.28 659.30,430.90 659.80,430.51 660.30,430.11 660.80,429.69 661.30,429.25 661.80,428.80 662.30,428.33 662.80,427.85 663.30,427.35 663.80,426.83 664.30,426.30 664.80,425.76 665.30,425.20 665.80,424.62 666.30,424.03 666.80,423.43 667.30,422.81 667.80,422.17 668.30,421.52 668.80,420.85 669.30,420.16 669.80,419.46 670.30,418.74 670.80,417.99 671.30,417.23 671.80,416.45 672.30,415.65 672.80,414.83 673.30,413.99 673.80,413.12 674.30,412.24 674.80,411.33 675.30,410.39 675.80,409.43 676.30,408.45 676.80,407.44 677.30,406.41 677.80,405.35 678.30,404.26 678.80,403.14 679.30,402.00 679.80,400.83 680.30,399.63 680.80,398.40 681.30,397.14 681.80,395.84 682.30,394.50 682.80,393.10 683.30,391.63 683.80,390.09 684.30,388.46 684.80,386.74 685.30,384.91 685.80,382.98 686.30,380.98 686.80,378.93 687.30,376.84 687.80,374.75 688.30,372.66 688.80,370.61 689.30,368.62 689.80,366.68 690.30,364.80 690.80,362.98 691.30,361.20 691.80,359.48 692.30,357.79 692.80,356.14 693.30,354.53 693.80,352.95 694.30,351.40 694.80,349.86 695.30,348.35 695.80,346.85 696.30,345.37 696.80,343.89 697.30,342.42 697.80,340.94 698.30,339.47 698.80,337.98 699.30,336.49 699.80,334.98 700.30,333.46 700.80,331.93 701.30,330.40 701.80,328.85 702.30,327.30 702.80,325.75 703.30,324.19 703.80,322.64 704.30,321.08 704.80,319.52 705.30,317.97 705.80,316.41 706.30,314.87 706.80,313.33 707.30,311.80 707.80,310.27 708.30,308.76 708.80,307.26 709.30,305.77 709.80,304.30 710.30,302.84 710.80,301.39 711.30,299.97 711.80,298.57 712.00,298.01" fill="none" stroke="#ff5050" stroke-width="1.2" stroke-linejoin="round"/>
<polyline points="88.00,128.00 88.06,127.31 88.12,126.61 88.18,125.92 88.24,125.23 88.30,124.54 88.36,123.84 88.43,123.15 88.49,122.45 88.55,121.76 88.62,121.06 88.68,120.37 88.75,119.67 88.82,118.98 88.88,118.28 88.95,117.59 89.02,116.89 89.09,116.19 89.16,115.50 89.23,114.80 89.30,114.10 89.37,113.41 89.44,112.71 89.52,112.01 89.59,111.32 89.66,110.62 89.74,109.92 89.82,109.22 89.89,108.53 89.97,107.83 90.04,107.13 90.12,106.43 90.20,105.74 90.28,105.04 90.36,104.34 90.44,103.64 90.52,102.95 90.60,102.25 90.68,101.55 90.76,100.85 90.85,100.15 90.93,99.46 91.01,98.76 91.10,98.06 91.18,97.36 91.27,96.67 91.35,95.97 91.44,95.27 91.52,94.57 91.61,93.88 91.70,93.18 91.79,92.48 91.88,91.79 91.96,91.09 92.05,90.39 92.14,89.70 92.23,89.00 92.32,88.31 92.42,87.61 92.51,86.91 92.60,86.22 92.69,85.52 92.78,84.83 92.88,84.14 92.97,83.44 93.06,82.75 93.16,82.05 93.25,81.36 93.35,80.67 93.44,79.97 93.54,79.28 93.63,78.59 93.73,77.90 93.83,77.20 93.93,76.51 94.02,75.82 94.12,75.13 94.22,74.44 94.32,73.75 94.42,73.06 94.51,72.37 94.61,71.68 94.71,71.00 94.81,70.31 94.91,69.62 95.01,68.93 95.11,68.25 95.22,67.56 95.32,66.87 95.42,66.19 95.52,65.51 95.62,64.82 95.72,64.14 95.83,63.46 95.93,62.78 96.03,62.10 96.14,61.42 96.24,60.74 96.34,60.06 96.45,59.39 96.55,58.71 96.66,58.04 96.76,57.37 96.87,56.69 96.98,55.99 97.09,55.28 97.21,54.54 97.34,53.77 97.48,52.95 97.63,52.08 97.79,51.18 97.96,50.26 98.15,49.39 98.36,48.61 98.58,47.95 98.83,47.47 99.09,47.21 99.38,47.19 99.69,47.40 100.00,47.77 100.33,48.28 100.65,48.85 100.97,49.46 101.28,50.07 101.58,50.69 101.88,51.31 102.17,51.93 102.45,52.56 102.72,53.19 102.99,53.82 103.25,54.46 103.50,55.10 103.74,55.74 103.98,56.39 104.22,57.04 104.45,57.69 104.67,58.34 104.89,59.00 105.10,59.66 105.30,60.32 105.50,60.99 105.70,61.65 105.89,62.32 106.08,62.99 106.26,63.66 106.44,64.34 106.61,65.01 106.78,65.69 106.94,66.37 107.11,67.05 107.26,67.74 107.42,68.42 107.57,69.11 107.72,69.79 107.87,70.48 108.01,71.17 108.15,71.86 108.29,72.55 108.43,73.24 108.57,73.94 108.70,74.63 108.83,75.32 108.96,76.02 109.09,76.71 109.22,77.41 109.35,78.10 109.47,78.80 109.60,79.49 109.72,80.19 109.85,80.88 109.97,81.58 110.10,82.27 110.22,82.97 110.35,83.66 110.47,84.36 110.59,85.05 110.72,85.75 110.84,86.44 110.96,87.14 111.09,87.83 111.21,88.52 111.33,89.22 111.45,89.91 111.57,90.61 111.69,91.30 111.81,92.00 111.93,92.69 112.05,93.38 112.17,94.08 112.29,94.77 112.41,95.46 112.53,96.16 112.65,96.85 112.77,97.55 112.89,98.24 113.01,98.93 113.12,99.63 113.24,100.32 113.36,101.01 113.48,101.70 113.59,102.40 113.71,103.09 113.83,103.78 113.94,104.48 114.06,105.17 114.17,105.86 114.29,106.56 114.40,107.25 114.52,107.94 114.63,108.63 114.75,109.33 114.86,110.02 114.98,110.71 115.09,111.40 115.20,112.09 115.32,112.79 115.43,113.48 115.54,114.17 115.65,114.86 115.77,115.56 115.88,116.25 115.99,116.94 116.10,117.63 116.21,118.32 116.33,119.01 116.44,119.71 116.55,120.40 116.66,121.09 116.77,121.78 116.88,122.47 116.99,123.16 117.10,123.86 117.21,124.55 117.32,125.24 117.43,125.93 117.54,126.62 117.65,127.31 117.76,128.00 117.87,128.70 117.97,129.39 118.08,130.08 118.19,130.77 118.30,131.46 118.41,132.15 118.51,132.84 118.62,133.53 118.73,134.22 118.84,134.91 118.94,135.61 119.05,136.30 119.16,136.99 119.26,137.68 119.37,138.37 119.48,139.06 119.58,139.75 119.69,140.44 119.79,141.13 119.90,141.82 120.00,142.51 120.11,143.20 120.22,143.89 120.32,144.58 120.43,145.27 120.53,145.96 120.63,146.66 120.74,147.35 120.84,148.04 120.95,148.73 121.05,149.42 121.16,150.11 121.26,150.80 121.36,151.49 121.47,152.18 121.57,152.87 121.67,153.56 121.78,154.25 121.88,154.94 121.98,155.63 122.09,156.32 122.19,157.01 122.29,157.70 122.40,158.39 122.50,159.08 122.60,159.77 122.70,160.46 122.80,161.15 122.91,161.84 123.01,162.53 123.11,163.22 123.21,163.91 123.31,164.60 123.42,165.29 123.52,165.98 123.62,166.67 123.72,167.36 123.82,168.05 123.92,168.74 124.02,169.43 124.13,170.12 124.23,170.81 124.33,171.50 124.43,172.19 124.53,172.88 124.63,173.57 124.73,174.26 124.83,174.95 124.93,175.64 125.03,176.33 125.13,177.02 125.23,177.71 125.33,178.40 125.43,179.09 125.53,179.78 125.64,180.47 125.74,181.16 125.84,181.85 125.94,182.54 126.04,183.23 126.14,183.92 126.24,184.62 126.34,185.31 126.44,186.00 126.54,186.69 126.64,187.38 126.73,188.07 126.83,188.76 126.93,189.45 127.03,190.14 127.13,190.83 127.23,191.52 127.33,192.21 127.43,192.90 127.53,193.59 127.63,194.28 127.73,194.97 127.83,195.66 127.93,196.35 128.03,197.04 128.13,197.73 128.23,198.42 128.33,199.11 128.43,199.80 128.53,200.50 128.63,201.19 128.73,201.88 128.83,202.57 128.93,203.26 129.03,203.95 129.13,204.64 129.23,205.33 129.33,206.02 129.43,206.71 129.53,207.40 129.62,208.10 129.72,208.79 129.82,209.48 129.92,210.17 130.02,210.86 130.12,211.55 130.22,212.24 130.32,212.93 130.42,213.62 130.52,214.32 130.62,215.01 130.72,215.70 130.82,216.39 130.92,217.08 131.02,217.77 131.12,218.46 131.22,219.16 131.32,219.85 131.42,220.54 131.52,221.23 131.63,221.92 131.73,222.61 131.83,223.31 131.93,224.00 132.03,224.69 132.13,225.38 132.23,226.07 132.33,226.76 132.43,227.46 132.53,228.15 132.63,228.84 132.73,229.53 132.83,230.22 132.93,230.92 133.03,231.61 133.13,232.30 133.24,232.99 133.34,233.68 133.44,234.38 133.54,235.07 133.64,235.76 133.74,236.45 133.84,237.15 133.94,237.84 134.05,238.53 134.15,239.22 134.25,239.91 134.35,240.61 134.45,241.30 134.55,241.99 134.66,242.68 134.76,243.38 134.86,244.07 134.96,244.76 135.06,245.45 135.17,246.15 135.27,246.84 135.37,247.53 135.47,248.22 135.57,248.92 135.68,249.61 135.78,250.30 135.88,251.00 135.98,251.69 136.09,252.38 136.19,253.07 136.29,253.77 136.40,254.46 136.50,255.15 136.60,255.84 136.70,256.54 136.81,257.23 136.91,257.92 137.01,258.62 137.12,259.31 137.22,260.00 137.32,260.69 137.43,261.39 137.53,262.08 137.64,262.77 137.74,263.47 137.84,264.16 137.95,264.85 138.05,265.55 138.16,266.24 138.26,266.93 138.36,267.62 138.47,268.32 138.57,269.01 138.68,269.70 138.78,270.40 138.89,271.09 138.99,271.78 139.10,272.48 139.20,273.17 139.31,273.86 139.41,274.56 139.52,275.25 139.62,275.94 139.73,276.64 139.84,277.33 139.94,278.02 140.05,278.71 140.15,279.41 140.26,280.10 140.37,280.79 140.47,281.49 140.58,282.18 140.68,282.87 140.79,283.57 140.90,284.26 141.00,284.95 141.11,285.65 141.22,286.34 141.33,287.03 141.43,287.73 141.54,288.42 141.65,289.11 141.76,289.81 141.86,290.50 141.97,291.19 142.08,291.89 142.19,292.58 142.29,293.27 142.40,293.97 142.51,294.66 142.62,295.36 142.73,296.05 142.84,296.74 142.95,297.44 143.05,298.13 143.16,298.82 143.27,299.52 143.38,300.21 143.49,300.90 143.60,301.60 143.71,302.29 143.82,302.98 143.93,303.68 144.03,304.37 144.14,305.06 144.25,305.76 144.36,306.45 144.47,307.14 144.58,307.84 144.69,308.53 144.80,309.22 144.91,309.92 145.02,310.61 145.13,311.30 145.24,312.00 145.35,312.69 145.46,313.38 145.56,314.08 145.67,314.77 145.78,315.47 145.89,316.16 146.00,316.85 146.11,317.55 146.22,318.24 146.33,318.93 146.44,319.63 146.55,320.32 146.66,321.01 146.77,321.71 146.87,322.40 146.98,323.09 147.09,323.79 147.20,324.48 147.31,325.17 147.42,325.87 147.53,326.56 147.64,327.25 147.74,327.95 147.85,328.64 147.96,329.33 148.07,330.03 148.18,330.72 148.28,331.41 148.39,332.11 148.50,332.80 148.61,333.49 148.71,334.19 148.82,334.88 148.93,335.57 149.04,336.27 149.14,336.96 149.25,337.65 149.36,338.35 149.46,339.04 149.57,339.73 149.68,340.43 149.78,341.12 149.89,341.81 149.99,342.51 150.10,343.20 150.21,343.89 150.31,344.59 150.42,345.28 150.52,345.97 150.63,346.66 150.73,347.36 150.83,348.05 150.94,348.74 151.04,349.44 151.15,350.13 151.25,350.82 151.35,351.52 151.46,352.21 151.56,352.90 151.66,353.60 151.77,354.29 151.87,354.98 151.97,355.67 152.07,356.37 152.17,357.06 152.27,357.75 152.38,358.45 152.48,359.14 152.58,359.83 152.68,360.52 152.78,361.22 152.88,361.91 152.98,362.60 153.08,363.30 153.18,363.99 153.28,364.68 153.37,365.37 153.47,366.07 153.57,366.76 153.67,367.45 153.77,368.14 153.86,368.84 153.96,369.53 154.06,370.22 154.16,370.91 154.25,371.61 154.35,372.30 154.44,372.99 154.54,373.68 154.64,374.38 154.73,375.07 154.83,375.76 154.92,376.45 155.02,377.15 155.11,377.84 155.21,378.53 155.30,379.22 155.40,379.92 155.49,380.61 155.59,381.30 155.68,381.99 155.77,382.68 155.87,383.38 155.96,384.07 156.05,384.76 156.15,385.45 156.24,386.14 156.33,386.84 156.43,387.53 156.52,388.22 156.61,388.91 156.71,389.60 156.80,390.30 156.89,390.99 156.98,391.68 157.08,392.37 157.17,393.06 157.26,393.76 157.35,394.45 157.45,395.14 157.54,395.83 157.63,396.52 157.72,397.21 157.81,397.91 157.91,398.60 158.00,399.29 158.09,399.98 158.18,400.67 158.27,401.36 158.36,402.05 158.46,402.75 158.55,403.44 158.64,404.13 158.73,404.82 158.82,405.51 158.91,406.20 159.01,406.89 159.10,407.58 159.19,408.27 159.28,408.97 159.37,409.66 159.47,410.35 159.56,411.04 159.65,411.73 159.74,412.42 159.83,413.11 159.93,413.80 160.02,414.49 160.11,415.18 160.20,415.87 160.30,416.57 160.39,417.26 160.48,417.95 160.57,418.64 160.67,419.33 160.76,420.02 160.85,420.71 160.94,421.40 161.04,422.09 161.13,422.78 161.22,423.47 161.32,424.16 161.41,424.85 161.51,425.54 161.60,426.23 161.69,426.92 161.79,427.61 161.88,428.30 161.98,428.99 162.07,429.68 162.17,430.37 162.26,431.06 162.36,431.75 162.45,432.44 162.55,433.13 162.64,433.82 162.74,434.51 162.83,435.20 162.93,435.89 163.03,436.58 163.12,437.27 163.22,437.96 163.32,438.65 163.41,439.34 163.51,440.03 163.61,440.72 163.71,441.40 163.81,442.09 163.90,442.78 164.00,443.47 164.10,444.16 164.20,444.85 164.30,445.54 164.40,446.23 164.50,446.92 164.60,447.61 164.70,448.29 164.80,448.98 164.90,449.67 165.00,450.36 165.11,451.05 165.21,451.74 165.31,452.43 165.41,453.12 165.52,453.80 165.62,454.49 165.72,455.18 165.83,455.87 165.93,456.56 166.03,457.25 166.14,457.93 166.24,458.62 166.35,459.31 166.46,460.00 166.56,460.69 166.67,461.37 166.77,462.06 166.88,462.75 166.99,463.44 167.10,464.12 167.21,464.81 167.31,465.50 167.42,466.19 167.53,466.87 167.64,467.56 167.75,468.25 167.86,468.94 167.98,469.62 168.09,470.31 168.20,471.00 168.31,471.69 168.42,472.37 168.54,473.06 168.65,473.75 168.77,474.43 168.88,475.12 168.99,475.81 169.11,476.49 169.23,477.18 169.34,477.87 169.46,478.55 169.58,479.24 169.70,479.93 169.82,480.62 169.93,481.30 170.05,481.99 170.18,482.68 170.30,483.37 170.42,484.05 170.54,484.74 170.67,485.43 170.79,486.12 170.92,486.81 171.04,487.50 171.17,488.18 171.30,488.87 171.42,489.56 171.55,490.25 171.68,490.94 171.82,491.64 171.95,492.33 172.08,493.02 172.21,493.71 172.35,494.40 172.49,495.10 172.62,495.79 172.76,496.48 172.90,497.18 173.04,497.87 173.18,498.57 173.32,499.26 173.47,499.96 173.61,500.66 173.76,501.35 173.91,502.05 174.05,502.75 174.20,503.45 174.35,504.15 174.51,504.85 174.66,505.55 174.82,506.25 174.97,506.96 175.13,507.66 175.29,508.36 175.45,509.07 175.61,509.77 175.77,510.48 175.94,511.19 176.10,511.90 176.27,512.61 176.44,513.32 176.61,514.03 176.78,514.74 176.95,515.45 177.13,516.16 177.31,516.88 177.48,517.59 177.66,518.31 177.85,519.03 178.03,519.75 178.21,520.47 178.40,521.19 178.59,521.91 178.78,522.63 178.98,523.34 179.19,524.04 179.41,524.73 179.64,525.40 179.89,526.06 180.15,526.68 180.44,527.28 180.75,527.85 181.09,528.38 181.45,528.87 181.85,529.32 182.28,529.72 182.74,530.07 183.24,530.36 183.76,530.60 184.31,530.78 184.87,530.88 185.43,530.92 185.98,530.89 186.51,530.78 187.01,530.59 187.48,530.31 187.91,529.96 188.30,529.52 188.65,529.02 188.97,528.46 189.26,527.85 189.51,527.19 189.74,526.50 189.93,525.79 190.10,525.05 190.25,524.31 190.37,523.56 190.48,522.82 190.56,522.09 190.63,521.36 190.69,520.63 190.73,519.91 190.76,519.19 190.78,518.48 190.79,517.77 190.80,517.06 190.81,516.36 190.81,515.65 190.82,514.95 190.83,514.25 190.84,513.56 190.85,512.86 190.88,512.16 190.90,511.46 190.94,510.77 190.98,510.07 191.02,509.37 191.07,508.68 191.13,507.98 191.18,507.28 191.24,506.59 191.31,505.89 191.37,505.20 191.44,504.50 191.51,503.81 191.59,503.11 191.66,502.42 191.73,501.72 191.81,501.03 191.88,500.33 191.96,499.63 192.03,498.94 192.11,498.24 192.18,497.55 192.25,496.85 192.33,496.16 192.40,495.46 192.47,494.77 192.54,494.07 192.61,493.37 192.69,492.68 192.76,491.98 192.83,491.29 192.90,490.59 192.97,489.89 193.03,489.20 193.10,488.50 193.17,487.81 193.24,487.11 193.31,486.41 193.37,485.72 193.44,485.02 193.51,484.33 193.57,483.63 193.64,482.93 193.71,482.24 193.77,481.54 193.84,480.84 193.90,480.15 193.96,479.45 194.03,478.75 194.09,478.06 194.16,477.36 194.22,476.66 194.28,475.97 194.34,475.27 194.41,474.57 194.47,473.88 194.53,473.18 194.59,472.48 194.65,471.79 194.71,471.09 194.77,470.39 194.83,469.69 194.89,469.00 194.95,468.30 195.01,467.60 195.07,466.91 195.13,466.21 195.19,465.51 195.25,464.81 195.30,464.12 195.36,463.42 195.42,462.72 195.48,462.03 195.53,461.33 195.59,460.63 195.65,459.93 195.70,459.24 195.76,458.54 195.81,457.84 195.87,457.14 195.93,456.45 195.98,455.75 196.04,455.05 196.09,454.35 196.14,453.65 196.20,452.96 196.25,452.26 196.31,451.56 196.36,450.86 196.41,450.17 196.47,449.47 196.52,448.77 196.57,448.07 196.63,447.37 196.68,446.68 196.73,445.98 196.78,445.28 196.84,444.58 196.89,443.89 196.94,443.19 196.99,442.49 197.04,441.79 197.09,441.09 197.15,440.40 197.20,439.70 197.25,439.00 197.30,438.30 197.35,437.60 197.40,436.91 197.45,436.21 197.50,435.51 197.55,434.81 197.60,434.11 197.65,433.41 197.70,432.72 197.75,432.02 197.80,431.32 197.85,430.62 197.90,429.92 197.95,429.23 198.00,428.53 198.05,427.83 198.10,427.13 198.14,426.43 198.19,425.73 198.24,425.04 198.29,424.34 198.34,423.64 198.39,422.94 198.44,422.24 198.49,421.54 198.53,420.85 198.58,420.15 198.63,419.45 198.68,418.75 198.73,418.05 198.78,417.36 198.82,416.66 198.87,415.96 198.92,415.26 198.97,414.56 199.02,413.86 199.06,413.17 199.11,412.47 199.16,411.77 199.21,411.07 199.26,410.37 199.30,409.67 199.35,408.98 199.40,408.28 199.45,407.58 199.50,406.88 199.54,406.18 199.59,405.49 199.64,404.79 199.69,404.09 199.74,403.39 199.78,402.69 199.83,401.99 199.88,401.30 199.93,400.60 199.98,399.90 200.02,399.20 200.07,398.50 200.12,397.81 200.17,397.11 200.22,396.41 200.27,395.71 200.31,395.01 200.36,394.31 200.41,393.62 200.46,392.92 200.51,392.22 200.56,391.52 200.61,390.82 200.65,390.13 200.70,389.43 200.75,388.73 200.80,388.03 200.85,387.33 200.90,386.64 200.95,385.94 201.00,385.24 201.05,384.54 201.09,383.84 201.14,383.15 201.19,382.45 201.24,381.75 201.29,381.05 201.34,380.35 201.39,379.66 201.44,378.96 201.49,378.26 201.54,377.56 201.59,376.86 201.64,376.17 201.69,375.47 201.74,374.77 201.79,374.07 201.84,373.38 201.89,372.68 201.94,371.98 201.99,371.28 202.04,370.58 202.09,369.89 202.14,369.19 202.19,368.49 202.24,367.79 202.29,367.09 202.34,366.40 202.39,365.70 202.44,365.00 202.49,364.30 202.54,363.61 202.59,362.91 202.64,362.21 202.69,361.51 202.74,360.81 202.79,360.12 202.84,359.42 202.89,358.72 202.94,358.02 203.00,357.33 203.05,356.63 203.10,355.93 203.15,355.23 203.20,354.53 203.25,353.84 203.30,353.14 203.35,352.44 203.40,351.74 203.46,351.05 203.51,350.35 203.56,349.65 203.61,348.95 203.66,348.26 203.71,347.56 203.76,346.86 203.82,346.16 203.87,345.46 203.92,344.77 203.97,344.07 204.02,343.37 204.08,342.67 204.13,341.98 204.18,341.28 204.23,340.58 204.28,339.88 204.34,339.18 204.39,338.49 204.44,337.79 204.49,337.09 204.55,336.39 204.60,335.70 204.65,335.00 204.70,334.30 204.76,333.60 204.81,332.91 204.86,332.21 204.91,331.51 204.97,330.81 205.02,330.11 205.07,329.42 205.13,328.72 205.18,328.02 205.23,327.32 205.29,326.63 205.34,325.93 205.39,325.23 205.45,324.53 205.50,323.83 205.55,323.14 205.61,322.44 205.66,321.74 205.71,321.04 205.77,320.35 205.82,319.65 205.88,318.95 205.93,318.25 205.98,317.56 206.04,316.86 206.09,316.16 206.15,315.46 206.20,314.76 206.25,314.07 206.31,313.37 206.36,312.67 206.42,311.97 206.47,311.28 206.53,310.58 206.58,309.88 206.64,309.18 206.69,308.48 206.75,307.79 206.80,307.09 206.86,306.39 206.91,305.69 206.97,305.00 207.02,304.30 207.08,303.60 207.13,302.90 207.19,302.20 207.24,301.51 207.30,300.81 207.35,300.11 207.41,299.41 207.46,298.72 207.52,298.02 207.58,297.32 207.63,296.62 207.69,295.92 207.74,295.23 207.80,294.53 207.86,293.83 207.91,293.13 207.97,292.43 208.03,291.74 208.08,291.04 208.14,290.34 208.19,289.64 208.25,288.94 208.31,288.25 208.36,287.55 208.42,286.85 208.48,286.15 208.53,285.45 208.59,284.76 208.65,284.06 208.71,283.36 208.76,282.66 208.82,281.97 208.88,281.27 208.93,280.57 208.99,279.87 209.05,279.17 209.11,278.48 209.16,277.78 209.22,277.08 209.28,276.38 209.34,275.68 209.40,274.98 209.45,274.29 209.51,273.59 209.57,272.89 209.63,272.19 209.69,271.49 209.75,270.80 209.80,270.10 209.86,269.40 209.92,268.70 209.98,268.00 210.04,267.31 210.10,266.61 210.16,265.91 210.22,265.21 210.28,264.52 210.34,263.82 210.40,263.12 210.46,262.42 210.52,261.73 210.59,261.03 210.65,260.33 210.71,259.64 210.77,258.94 210.84,258.24 210.90,257.54 210.97,256.85 211.03,256.15 211.09,255.46 211.16,254.76 211.23,254.06 211.29,253.37 211.36,252.67 211.43,251.98 211.49,251.28 211.56,250.59 211.63,249.89 211.70,249.20 211.77,248.50 211.84,247.81 211.91,247.11 211.98,246.42 212.06,245.73 212.13,245.03 212.20,244.34 212.28,243.65 212.35,242.96 212.43,242.26 212.50,241.57 212.58,240.88 212.66,240.19 212.74,239.50 212.82,238.81 212.90,238.11 212.98,237.42 213.06,236.73 213.15,236.04 213.23,235.35 213.32,234.66 213.42,233.97 213.52,233.28 213.62,232.58 213.73,231.89 213.84,231.20 213.95,230.50 214.08,229.81 214.21,229.11 214.34,228.41 214.48,227.71 214.64,227.01 214.79,226.31 214.96,225.61 215.14,224.90 215.32,224.19 215.51,223.49 215.72,222.77 215.93,222.06 216.16,221.35 216.39,220.63 216.64,219.92 216.90,219.26 217.17,218.69 217.46,218.25 217.76,217.97 218.07,217.90 218.39,218.03 218.72,218.35 219.06,218.83 219.40,219.43 219.73,220.14 220.06,220.93 220.38,221.77 220.69,222.64 220.97,223.50 221.25,224.36 221.50,225.22 221.75,226.06 221.98,226.89 222.21,227.71 222.42,228.51 222.63,229.30 222.84,230.07 223.04,230.82 223.24,231.55 223.45,232.26 223.65,232.95 223.86,233.61 224.08,234.24 224.30,234.85 224.53,235.43 224.78,235.98 225.03,236.50 225.30,236.98 225.59,237.43 225.89,237.84 226.21,238.19 226.53,238.45 226.86,238.61 227.18,238.64 227.50,238.53 227.81,238.31 228.12,237.97 228.42,237.54 228.71,237.02 229.00,236.44 229.28,235.80 229.56,235.12 229.83,234.41 230.09,233.69 230.35,232.96 230.60,232.23 230.84,231.51 231.07,230.78 231.30,230.06 231.53,229.34 231.75,228.62 231.96,227.90 232.16,227.19 232.37,226.47 232.56,225.76 232.75,225.04 232.94,224.33 233.12,223.62 233.29,222.91 233.46,222.20 233.63,221.49 233.79,220.79 233.94,220.08 234.09,219.38 234.24,218.67 234.39,217.97 234.53,217.27 234.66,216.57 234.80,215.87 234.93,215.17 235.05,214.47 235.18,213.77 235.30,213.08 235.41,212.38 235.53,211.69 235.64,210.99 235.75,210.30 235.86,209.61 235.96,208.91 236.06,208.22 236.16,207.53 236.26,206.84 236.36,206.15 236.46,205.46 236.55,204.78 236.64,204.09 236.74,203.40 236.83,202.71 236.92,202.03 237.01,201.34 237.09,200.66 237.18,199.97 237.27,199.29 237.36,198.60 237.45,197.92 237.53,197.23 237.62,196.55 237.71,195.87 237.80,195.19 237.89,194.50 237.98,193.82 238.07,193.14 238.16,192.46 238.26,191.78 238.35,191.09 238.45,190.41 238.55,189.73 238.65,189.05 238.75,188.37 238.85,187.69 238.96,187.00 239.06,186.32 239.17,185.64 239.28,184.96 239.39,184.28 239.50,183.60 239.61,182.91 239.73,182.23 239.84,181.55 239.96,180.87 240.07,180.18 240.19,179.50 240.31,178.82 240.43,178.13 240.55,177.45 240.66,176.77 240.78,176.08 240.90,175.40 241.02,174.71 241.14,174.03 241.26,173.34 241.37,172.65 241.49,171.97 241.61,171.28 241.72,170.59 241.84,169.90 241.95,169.21 242.07,168.52 242.18,167.83 242.29,167.14 242.40,166.45 242.51,165.75 242.62,165.06 242.72,164.37 242.82,163.67 242.93,162.98 243.03,162.28 243.13,161.58 243.22,160.88 243.32,160.19 243.41,159.49 243.50,158.79 243.59,158.08 243.68,157.38 243.77,156.68 243.86,155.98 243.94,155.28 244.02,154.57 244.11,153.87 244.19,153.16 244.27,152.46 244.34,151.75 244.42,151.05 244.50,150.34 244.57,149.63 244.64,148.93 244.72,148.22 244.79,147.51 244.86,146.81 244.93,146.10 245.00,145.39 245.07,144.68 245.13,143.97 245.20,143.26 245.27,142.55 245.33,141.85 245.39,141.14 245.46,140.43 245.52,139.72 245.58,139.01 245.65,138.30 245.71,137.59 245.77,136.88 245.83,136.18 245.89,135.47 245.95,134.76 246.01,134.05 246.07,133.34 246.13,132.64 246.19,131.93 246.25,131.22 246.31,130.51 246.37,129.81 246.43,129.10 246.49,128.40 246.55,127.69 246.61,126.99 246.67,126.28 246.73,125.58 246.79,124.87 246.85,124.17 246.91,123.47 246.97,122.77 247.03,122.07 247.10,121.36 247.16,120.66 247.22,119.97 247.29,119.27 247.35,118.57 247.42,117.87 247.48,117.18 247.55,116.48 247.62,115.79 247.68,115.09 247.75,114.40 247.82,113.71 247.89,113.02 247.96,112.33 248.04,111.64 248.11,110.95 248.19,110.26 248.26,109.57 248.34,108.89 248.42,108.21 248.50,107.52 248.58,106.84 248.66,106.16 248.74,105.48 248.83,104.80 248.91,104.13 249.00,103.45 249.09,102.78 249.18,102.10 249.27,101.43 249.36,100.76 249.46,100.09 249.55,99.42 249.65,98.75 249.75,98.08 249.85,97.41 249.95,96.74 250.05,96.07 250.15,95.40 250.25,94.74 250.36,94.07 250.46,93.40 250.57,92.73 250.68,92.07 250.79,91.40 250.90,90.73 251.01,90.06 251.12,89.39 251.23,88.72 251.34,88.05 251.46,87.38 251.57,86.71 251.69,86.04 251.81,85.37 251.92,84.69 252.04,84.02 252.16,83.34 252.28,82.66 252.40,81.98 252.52,81.30 252.64,80.62 252.77,79.94 252.89,79.25 253.01,78.57 253.14,77.88 253.26,77.19 253.38,76.50 253.51,75.80 253.64,75.11 253.76,74.41 253.89,73.71 254.02,73.01 254.14,72.30 254.27,71.59 254.40,70.88 254.53,70.17 254.66,69.46 254.78,68.74 254.91,68.02 255.04,67.29 255.17,66.57 255.30,65.84 255.43,65.11 255.56,64.37 255.69,63.63 255.82,62.89 255.95,62.14 256.08,61.39 256.21,60.64 256.34,59.88 256.47,59.12 256.60,58.36 256.73,57.59 256.86,56.82 256.99,56.04 257.12,55.27 257.26,54.51 257.40,53.77 257.54,53.06 257.69,52.38 257.85,51.74 258.02,51.16 258.21,50.63 258.40,50.16 258.61,49.77 258.84,49.47 259.09,49.25 259.35,49.12 259.63,49.11 259.94,49.20 260.27,49.41 260.62,49.73 260.98,50.15 261.36,50.64 261.74,51.20 262.11,51.80 262.48,52.43 262.83,53.08 263.17,53.73 263.50,54.38 263.80,55.04 264.10,55.69 264.38,56.35 264.64,57.02 264.90,57.68 265.14,58.35 265.37,59.02 265.59,59.69 265.80,60.36 266.00,61.04 266.20,61.71 266.38,62.39 266.56,63.07 266.73,63.75 266.90,64.43 267.06,65.11 267.22,65.80 267.37,66.48 267.52,67.16 267.67,67.85 267.82,68.53 267.97,69.22 268.11,69.90 268.26,70.58 268.41,71.27 268.55,71.95 268.70,72.64 268.84,73.32 268.98,74.01 269.13,74.69 269.27,75.38 269.41,76.06 269.56,76.75 269.70,77.43 269.84,78.12 269.98,78.81 270.12,79.49 270.26,80.18 270.40,80.86 270.54,81.55 270.68,82.23 270.82,82.92 270.96,83.61 271.10,84.29 271.23,84.98 271.37,85.66 271.51,86.35 271.64,87.04 271.78,87.72 271.92,88.41 272.05,89.10 272.19,89.78 272.32,90.47 272.46,91.16 272.59,91.84 272.72,92.53 272.86,93.22 272.99,93.90 273.12,94.59 273.25,95.28 273.39,95.96 273.52,96.65 273.65,97.34 273.78,98.03 273.91,98.71 274.04,99.40 274.17,100.09 274.30,100.78 274.43,101.46 274.56,102.15 274.69,102.84 274.82,103.53 274.94,104.21 275.07,104.90 275.20,105.59 275.33,106.28 275.45,106.97 275.58,107.65 275.70,108.34 275.83,109.03 275.96,109.72 276.08,110.41 276.21,111.10 276.33,111.78 276.45,112.47 276.58,113.16 276.70,113.85 276.83,114.54 276.95,115.23 277.07,115.92 277.19,116.60 277.32,117.29 277.44,117.98 277.56,118.67 277.68,119.36 277.80,120.05 277.92,120.74 278.04,121.43 278.17,122.12 278.29,122.81 278.41,123.50 278.52,124.18 278.64,124.87 278.76,125.56 278.88,126.25 279.00,126.94 279.12,127.63 279.24,128.32 279.36,129.01 279.47,129.70 279.59,130.39 279.71,131.08 279.82,131.77 279.94,132.46 280.06,133.15 280.17,133.84 280.29,134.53 280.41,135.22 280.52,135.91 280.64,136.60 280.75,137.29 280.87,137.98 280.98,138.67 281.10,139.36 281.21,140.05 281.32,140.74 281.44,141.43 281.55,142.12 281.67,142.82 281.78,143.51 281.89,144.20 282.00,144.89 282.12,145.58 282.23,146.27 282.34,146.96 282.45,147.65 282.57,148.34 282.68,149.03 282.79,149.72 282.90,150.41 283.01,151.11 283.12,151.80 283.23,152.49 283.34,153.18 283.46,153.87 283.57,154.56 283.68,155.25 283.79,155.94 283.90,156.63 284.01,157.33 284.12,158.02 284.22,158.71 284.33,159.40 284.44,160.09 284.55,160.78 284.66,161.47 284.77,162.17 284.88,162.86 284.99,163.55 285.10,164.24 285.20,164.93 285.31,165.62 285.42,166.32 285.53,167.01 285.63,167.70 285.74,168.39 285.85,169.08 285.96,169.77 286.06,170.47 286.17,171.16 286.28,171.85 286.38,172.54 286.49,173.23 286.60,173.93 286.70,174.62 286.81,175.31 286.92,176.00 287.02,176.69 287.13,177.39 287.24,178.08 287.34,178.77 287.45,179.46 287.55,180.15 287.66,180.85 287.76,181.54 287.87,182.23 287.97,182.92 288.08,183.61 288.19,184.31 288.29,185.00 288.40,185.69 288.50,186.38 288.61,187.08 288.71,187.77 288.82,188.46 288.92,189.15 289.02,189.84 289.13,190.54 289.23,191.23 289.34,191.92 289.44,192.61 289.55,193.31 289.65,194.00 289.76,194.69 289.86,195.38 289.96,196.08 290.07,196.77 290.17,197.46 290.28,198.15 290.38,198.85 290.48,199.54 290.59,200.23 290.69,200.92 290.80,201.61 290.90,202.31 291.00,203.00 291.11,203.69 291.21,204.38 291.32,205.08 291.42,205.77 291.52,206.46 291.63,207.15 291.73,207.85 291.83,208.54 291.94,209.23 292.04,209.92 292.15,210.62 292.25,211.31 292.35,212.00 292.46,212.69 292.56,213.38 292.66,214.08 292.77,214.77 292.87,215.46 292.98,216.15 293.08,216.85 293.18,217.54 293.29,218.23 293.39,218.92 293.49,219.62 293.60,220.31 293.70,221.00 293.81,221.69 293.91,222.38 294.01,223.08 294.12,223.77 294.22,224.46 294.33,225.15 294.43,225.84 294.53,226.54 294.64,227.23 294.74,227.92 294.85,228.61 294.95,229.30 295.06,230.00 295.16,230.69 295.26,231.38 295.37,232.07 295.47,232.76 295.58,233.46 295.68,234.15 295.79,234.84 295.89,235.53 296.00,236.22 296.10,236.91 296.21,237.61 296.31,238.30 296.42,238.99 296.52,239.68 296.63,240.37 296.73,241.06 296.84,241.76 296.94,242.45 297.05,243.14 297.15,243.83 297.26,244.52 297.37,245.21 297.47,245.90 297.58,246.60 297.68,247.29 297.79,247.98 297.90,248.67 298.00,249.36 298.11,250.05 298.22,250.74 298.32,251.43 298.43,252.13 298.54,252.82 298.64,253.51 298.75,254.20 298.86,254.89 298.96,255.58 299.07,256.27 299.18,256.96 299.29,257.65 299.40,258.34 299.50,259.03 299.61,259.72 299.72,260.42 299.83,261.11 299.94,261.80 300.05,262.49 300.16,263.18 300.27,263.87 300.38,264.56 300.49,265.25 300.60,265.94 300.71,266.63 300.82,267.32 300.93,268.01 301.04,268.70 301.15,269.39 301.26,270.08 301.37,270.77 301.49,271.46 301.60,272.15 301.71,272.84 301.82,273.53 301.94,274.22 302.05,274.91 302.16,275.60 302.28,276.29 302.39,276.98 302.51,277.67 302.62,278.36 302.74,279.05 302.85,279.74 302.97,280.43 303.08,281.12 303.20,281.81 303.32,282.50 303.44,283.19 303.55,283.88 303.67,284.57 303.79,285.26 303.91,285.95 304.03,286.64 304.15,287.33 304.27,288.02 304.39,288.71 304.51,289.40 304.63,290.09 304.75,290.78 304.87,291.47 304.99,292.16 305.12,292.85 305.24,293.54 305.36,294.23 305.49,294.92 305.61,295.61 305.74,296.30 305.86,296.99 305.98,297.68 306.11,298.37 306.24,299.06 306.36,299.75 306.49,300.44 306.61,301.13 306.74,301.81 306.87,302.50 306.99,303.19 307.12,303.88 307.25,304.57 307.37,305.26 307.50,305.95 307.63,306.64 307.76,307.33 307.88,308.02 308.01,308.71 308.14,309.40 308.27,310.09 308.40,310.78 308.53,311.47 308.65,312.16 308.78,312.85 308.91,313.54 309.04,314.23 309.17,314.92 309.30,315.61 309.42,316.30 309.55,316.99 309.68,317.68 309.81,318.37 309.94,319.06 310.07,319.74 310.19,320.43 310.32,321.12 310.45,321.81 310.58,322.50 310.70,323.19 310.83,323.88 310.96,324.57 311.09,325.26 311.21,325.95 311.34,326.64 311.47,327.33 311.59,328.02 311.72,328.71 311.85,329.40 311.97,330.09 312.10,330.78 312.22,331.47 312.35,332.16 312.47,332.85 312.60,333.54 312.72,334.23 312.84,334.92 312.97,335.61 313.09,336.30 313.21,336.99 313.33,337.68 313.46,338.37 313.58,339.06 313.70,339.75 313.82,340.44 313.94,341.13 314.06,341.82 314.18,342.51 314.30,343.20 314.42,343.89 314.53,344.58 314.65,345.27 314.77,345.96 314.88,346.65 315.00,347.34 315.12,348.03 315.23,348.72 315.34,349.41 315.46,350.10 315.57,350.79 315.68,351.48 315.80,352.18 315.91,352.87 316.02,353.56 316.13,354.25 316.24,354.94 316.35,355.63 316.45,356.32 316.56,357.01 316.67,357.70 316.77,358.39 316.88,359.08 316.98,359.77 317.09,360.46 317.19,361.15 317.29,361.85 317.39,362.54 317.49,363.23 317.59,363.92 317.69,364.61 317.79,365.30 317.89,365.99 317.98,366.68 318.08,367.37 318.17,368.07 318.27,368.76 318.36,369.45 318.45,370.14 318.54,370.83 318.63,371.52 318.72,372.21 318.81,372.91 318.90,373.60 318.99,374.29 319.07,374.98 319.16,375.67 319.24,376.36 319.32,377.06 319.40,377.75 319.48,378.44 319.56,379.13 319.64,379.82 319.72,380.51 319.79,381.21 319.87,381.90 319.94,382.59 320.02,383.28 320.09,383.98 320.16,384.67 320.23,385.36 320.30,386.05 320.37,386.74 320.44,387.44 320.51,388.13 320.58,388.82 320.65,389.51 320.72,390.21 320.79,390.90 320.86,391.59 320.93,392.29 321.00,392.98 321.06,393.67 321.13,394.36 321.20,395.06 321.27,395.75 321.34,396.44 321.41,397.14 321.48,397.83 321.56,398.52 321.63,399.21 321.70,399.91 321.77,400.60 321.85,401.29 321.92,401.99 322.00,402.68 322.08,403.37 322.16,404.07 322.24,404.76 322.32,405.45 322.40,406.15 322.49,406.84 322.57,407.53 322.66,408.23 322.75,408.92 322.84,409.61 322.93,410.31 323.02,411.00 323.12,411.69 323.21,412.39 323.31,413.08 323.42,413.78 323.52,414.47 323.62,415.16 323.73,415.86 323.84,416.55 323.95,417.24 324.07,417.94 324.18,418.63 324.30,419.33 324.42,420.02 324.54,420.71 324.66,421.41 324.79,422.10 324.91,422.79 325.04,423.49 325.16,424.18 325.29,424.88 325.42,425.57 325.55,426.26 325.68,426.96 325.81,427.65 325.94,428.35 326.07,429.04 326.21,429.73 326.34,430.43 326.47,431.12 326.60,431.82 326.74,432.51 326.87,433.20 327.00,433.90 327.14,434.59 327.27,435.29 327.40,435.98 327.53,436.67 327.66,437.37 327.79,438.06 327.92,438.76 328.05,439.45 328.17,440.15 328.30,440.84 328.42,441.53 328.55,442.23 328.67,442.92 328.79,443.62 328.91,444.31 329.03,445.00 329.15,445.70 329.27,446.39 329.38,447.09 329.50,447.78 329.62,448.47 329.73,449.17 329.84,449.86 329.96,450.56 330.07,451.25 330.18,451.94 330.29,452.64 330.40,453.33 330.51,454.02 330.62,454.72 330.73,455.41 330.84,456.10 330.95,456.80 331.06,457.49 331.17,458.18 331.27,458.87 331.38,459.57 331.49,460.26 331.60,460.95 331.70,461.64 331.81,462.34 331.91,463.03 332.02,463.72 332.13,464.41 332.23,465.10 332.34,465.79 332.44,466.49 332.55,467.18 332.65,467.87 332.76,468.56 332.87,469.25 332.97,469.94 333.08,470.63 333.18,471.32 333.29,472.01 333.40,472.70 333.51,473.39 333.61,474.08 333.72,474.77 333.83,475.45 333.94,476.14 334.05,476.83 334.16,477.52 334.27,478.21 334.38,478.89 334.49,479.58 334.60,480.27 334.71,480.96 334.82,481.64 334.94,482.33 335.05,483.02 335.17,483.70 335.28,484.39 335.40,485.07 335.52,485.76 335.63,486.44 335.75,487.13 335.87,487.81 335.99,488.49 336.11,489.18 336.24,489.86 336.36,490.54 336.49,491.23 336.61,491.91 336.74,492.59 336.87,493.27 337.00,493.95 337.13,494.63 337.26,495.31 337.39,495.99 337.52,496.67 337.66,497.35 337.80,498.03 337.93,498.71 338.07,499.39 338.21,500.07 338.36,500.75 338.50,501.42 338.65,502.10 338.79,502.78 338.94,503.45 339.09,504.13 339.24,504.80 339.40,505.48 339.55,506.15 339.71,506.83 339.87,507.50 340.03,508.17 340.19,508.85 340.36,509.52 340.52,510.20 340.70,510.87 340.87,511.55 341.05,512.22 341.23,512.90 341.41,513.58 341.60,514.26 341.79,514.93 341.99,515.62 342.19,516.30 342.39,516.98 342.60,517.66 342.82,518.35 343.03,519.04 343.26,519.73 343.49,520.42 343.72,521.11 343.96,521.81 344.20,522.50 344.45,523.20 344.71,523.90 344.98,524.60 345.25,525.29 345.54,525.97 345.85,526.64 346.18,527.29 346.52,527.92 346.89,528.52 347.28,529.10 347.69,529.64 348.14,530.15 348.61,530.63 349.12,531.05 349.65,531.38 350.19,531.59 350.73,531.63 351.26,531.47 351.78,531.16 352.28,530.73 352.73,530.25 353.15,529.74 353.52,529.21 353.86,528.67 354.17,528.10 354.44,527.52 354.68,526.93 354.90,526.31 355.08,525.69 355.25,525.05 355.39,524.41 355.52,523.75 355.62,523.08 355.71,522.41 355.79,521.73 355.86,521.04 355.92,520.35 355.97,519.65 356.02,518.96 356.07,518.26 356.12,517.56 356.17,516.86 356.21,516.17 356.26,515.47 356.31,514.77 356.36,514.07 356.41,513.37 356.46,512.67 356.51,511.98 356.56,511.28 356.61,510.58 356.66,509.88 356.72,509.18 356.77,508.48 356.82,507.78 356.87,507.09 356.93,506.39 356.98,505.69 357.03,504.99 357.09,504.29 357.14,503.59 357.20,502.89 357.25,502.19 357.31,501.50 357.36,500.80 357.42,500.10 357.47,499.40 357.53,498.70 357.58,498.00 357.64,497.30 357.70,496.60 357.75,495.90 357.81,495.20 357.87,494.51 357.93,493.81 357.98,493.11 358.04,492.41 358.10,491.71 358.16,491.01 358.22,490.31 358.28,489.61 358.33,488.91 358.39,488.21 358.45,487.51 358.51,486.81 358.57,486.11 358.63,485.41 358.69,484.71 358.75,484.02 358.81,483.32 358.87,482.62 358.93,481.92 358.99,481.22 359.05,480.52 359.11,479.82 359.18,479.12 359.24,478.42 359.30,477.72 359.36,477.02 359.42,476.32 359.48,475.62 359.54,474.92 359.60,474.22 359.67,473.52 359.73,472.82 359.79,472.12 359.85,471.42 359.91,470.72 359.98,470.02 360.04,469.32 360.10,468.62 360.16,467.92 360.22,467.22 360.29,466.52 360.35,465.82 360.41,465.12 360.47,464.42 360.54,463.72 360.60,463.02 360.66,462.32 360.72,461.62 360.78,460.92 360.85,460.22 360.91,459.52 360.97,458.82 361.03,458.12 361.10,457.42 361.16,456.72 361.22,456.02 361.28,455.32 361.34,454.62 361.41,453.92 361.47,453.22 361.53,452.52 361.59,451.82 361.65,451.12 361.71,450.42 361.78,449.72 361.84,449.02 361.90,448.32 361.96,447.62 362.02,446.92 362.08,446.22 362.14,445.52 362.20,444.82 362.26,444.12 362.32,443.42 362.39,442.72 362.45,442.02 362.51,441.32 362.57,440.62 362.63,439.92 362.69,439.22 362.74,438.52 362.80,437.82 362.86,437.12 362.92,436.42 362.98,435.72 363.04,435.02 363.10,434.32 363.16,433.62 363.21,432.92 363.27,432.22 363.33,431.52 363.39,430.82 363.45,430.12 363.50,429.42 363.56,428.72 363.62,428.02 363.67,427.32 363.73,426.62 363.78,425.92 363.84,425.22 363.89,424.52 363.95,423.82 364.00,423.12 364.06,422.42 364.11,421.72 364.17,421.02 364.22,420.32 364.28,419.62 364.33,418.92 364.38,418.22 364.43,417.52 364.49,416.82 364.54,416.12 364.59,415.42 364.64,414.72 364.70,414.02 364.75,413.32 364.80,412.62 364.85,411.92 364.90,411.22 364.95,410.52 365.00,409.82 365.05,409.12 365.10,408.42 365.15,407.72 365.20,407.02 365.25,406.32 365.30,405.63 365.35,404.93 365.40,404.23 365.45,403.53 365.50,402.83 365.55,402.13 365.60,401.43 365.65,400.73 365.70,400.03 365.75,399.33 365.79,398.63 365.84,397.93 365.89,397.23 365.94,396.53 365.99,395.83 366.04,395.13 366.08,394.43 366.13,393.74 366.18,393.04 366.23,392.34 366.28,391.64 366.32,390.94 366.37,390.24 366.42,389.54 366.47,388.84 366.52,388.14 366.56,387.44 366.61,386.74 366.66,386.05 366.71,385.35 366.76,384.65 366.81,383.95 366.85,383.25 366.90,382.55 366.95,381.85 367.00,381.15 367.05,380.46 367.09,379.76 367.14,379.06 367.19,378.36 367.24,377.66 367.29,376.96 367.34,376.26 367.39,375.57 367.44,374.87 367.48,374.17 367.53,373.47 367.58,372.77 367.63,372.07 367.68,371.38 367.73,370.68 367.78,369.98 367.83,369.28 367.88,368.58 367.93,367.89 367.98,367.19 368.03,366.49 368.08,365.79 368.13,365.09 368.18,364.40 368.24,363.70 368.29,363.00 368.34,362.30 368.39,361.61 368.44,360.91 368.49,360.21 368.55,359.51 368.60,358.81 368.65,358.12 368.71,357.42 368.76,356.72 368.81,356.03 368.87,355.33 368.92,354.63 368.97,353.93 369.03,353.24 369.08,352.54 369.14,351.84 369.19,351.15 369.25,350.45 369.31,349.75 369.36,349.05 369.42,348.36 369.48,347.66 369.53,346.96 369.59,346.27 369.65,345.57 369.71,344.87 369.76,344.18 369.82,343.48 369.88,342.78 369.94,342.09 370.00,341.39 370.06,340.70 370.12,340.00 370.17,339.30 370.23,338.61 370.29,337.91 370.35,337.21 370.41,336.52 370.47,335.82 370.54,335.13 370.60,334.43 370.66,333.74 370.72,333.04 370.78,332.34 370.84,331.65 370.90,330.95 370.97,330.26 371.03,329.56 371.09,328.87 371.15,328.17 371.21,327.48 371.28,326.78 371.34,326.09 371.40,325.39 371.47,324.70 371.53,324.00 371.59,323.31 371.66,322.61 371.72,321.92 371.78,321.22 371.85,320.53 371.91,319.83 371.98,319.14 372.04,318.44 372.11,317.75 372.17,317.06 372.23,316.36 372.30,315.67 372.36,314.97 372.43,314.28 372.49,313.58 372.56,312.89 372.62,312.20 372.69,311.50 372.75,310.81 372.82,310.12 372.89,309.42 372.95,308.73 373.02,308.04 373.08,307.34 373.15,306.65 373.21,305.96 373.28,305.26 373.35,304.57 373.41,303.88 373.48,303.18 373.54,302.49 373.61,301.80 373.68,301.10 373.74,300.41 373.81,299.72 373.87,299.03 373.94,298.33 374.01,297.64 374.07,296.95 374.14,296.26 374.21,295.57 374.27,294.87 374.34,294.18 374.40,293.49 374.47,292.80 374.54,292.11 374.60,291.41 374.67,290.72 374.74,290.03 374.80,289.34 374.87,288.65 374.93,287.96 375.00,287.27 375.07,286.57 375.13,285.88 375.20,285.19 375.26,284.50 375.33,283.81 375.40,283.12 375.46,282.43 375.53,281.74 375.59,281.05 375.66,280.36 375.72,279.67 375.79,278.98 375.85,278.29 375.92,277.60 375.99,276.91 376.05,276.22 376.12,275.53 376.18,274.84 376.25,274.15 376.31,273.46 376.37,272.77 376.44,272.08 376.50,271.39 376.57,270.70 376.63,270.01 376.70,269.32 376.76,268.63 376.82,267.94 376.89,267.26 376.95,266.57 377.01,265.88 377.08,265.19 377.14,264.50 377.20,263.81 377.27,263.12 377.33,262.44 377.39,261.75 377.46,261.06 377.52,260.37 377.58,259.68 377.64,259.00 377.70,258.31 377.77,257.62 377.83,256.93 377.89,256.25 377.95,255.56 378.01,254.87 378.07,254.19 378.13,253.50 378.19,252.81 378.26,252.12 378.32,251.43 378.38,250.74 378.44,250.04 378.51,249.35 378.58,248.65 378.64,247.95 378.71,247.24 378.78,246.53 378.86,245.82 378.93,245.11 379.01,244.39 379.09,243.66 379.17,242.94 379.26,242.20 379.34,241.47 379.43,240.72 379.53,239.97 379.63,239.22 379.73,238.45 379.83,237.69 379.94,236.91 380.05,236.13 380.17,235.34 380.29,234.54 380.41,233.73 380.54,232.92 380.68,232.09 380.82,231.26 380.96,230.42 381.11,229.57 381.27,228.71 381.43,227.85 381.59,226.99 381.77,226.15 381.95,225.31 382.13,224.50 382.32,223.71 382.52,222.96 382.72,222.24 382.94,221.56 383.15,220.93 383.38,220.35 383.61,219.83 383.85,219.38 384.10,219.00 384.36,218.69 384.62,218.47 384.90,218.33 385.18,218.28 385.47,218.33 385.76,218.48 386.07,218.73 386.38,219.07 386.69,219.48 387.00,219.97 387.31,220.53 387.63,221.15 387.93,221.82 388.23,222.54 388.53,223.30 388.81,224.09 389.08,224.91 389.35,225.74 389.60,226.59 389.84,227.45 390.08,228.32 390.31,229.18 390.55,230.04 390.77,230.88 391.00,231.71 391.24,232.52 391.47,233.30 391.71,234.04 391.96,234.75 392.22,235.42 392.49,236.04 392.77,236.61 393.06,237.12 393.37,237.57 393.69,237.95 394.03,238.26 394.39,238.48 394.75,238.63 395.11,238.68 395.46,238.65 395.81,238.51 396.15,238.28 396.48,237.97 396.80,237.57 397.11,237.11 397.41,236.58 397.71,235.99 397.99,235.34 398.27,234.66 398.54,233.93 398.80,233.18 399.06,232.40 399.31,231.60 399.55,230.80 399.79,229.99 400.01,229.18 400.24,228.38 400.45,227.60 400.66,226.82 400.86,226.06 401.06,225.30 401.25,224.55 401.44,223.81 401.62,223.08 401.80,222.36 401.97,221.64 402.14,220.93 402.30,220.23 402.46,219.53 402.61,218.84 402.76,218.15 402.91,217.47 403.05,216.80 403.19,216.12 403.33,215.46 403.46,214.79 403.59,214.13 403.72,213.47 403.85,212.82 403.97,212.16 404.09,211.51 404.21,210.86 404.33,210.21 404.44,209.56 404.56,208.91 404.67,208.26 404.79,207.61 404.90,206.96 405.01,206.31 405.12,205.65 405.23,205.00 405.34,204.34 405.45,203.68 405.56,203.02 405.67,202.35 405.78,201.69 405.89,201.02 406.00,200.35 406.11,199.68 406.22,199.01 406.32,198.33 406.43,197.66 406.54,196.98 406.65,196.30 406.75,195.62 406.86,194.94 406.97,194.26 407.07,193.57 407.18,192.89 407.29,192.20 407.39,191.51 407.50,190.82 407.60,190.13 407.71,189.44 407.81,188.75 407.91,188.06 408.02,187.36 408.12,186.67 408.22,185.97 408.33,185.27 408.43,184.57 408.53,183.88 408.64,183.18 408.74,182.48 408.84,181.78 408.94,181.07 409.04,180.37 409.14,179.67 409.24,178.97 409.34,178.26 409.44,177.56 409.54,176.85 409.64,176.15 409.74,175.44 409.84,174.74 409.94,174.03 410.04,173.33 410.14,172.62 410.24,171.91 410.34,171.21 410.43,170.50 410.53,169.79 410.63,169.09 410.73,168.38 410.82,167.67 410.92,166.97 411.02,166.26 411.11,165.55 411.21,164.85 411.30,164.14 411.40,163.44 411.49,162.73 411.59,162.03 411.68,161.33 411.78,160.62 411.87,159.92 411.97,159.22 412.06,158.51 412.15,157.81 412.25,157.11 412.34,156.41 412.43,155.71 412.53,155.01 412.62,154.32 412.71,153.62 412.80,152.92 412.89,152.22 412.99,151.53 413.08,150.83 413.17,150.14 413.26,149.44 413.35,148.75 413.44,148.05 413.53,147.36 413.62,146.67 413.71,145.97 413.80,145.28 413.89,144.59 413.99,143.90 414.08,143.21 414.16,142.52 414.25,141.82 414.34,141.13 414.43,140.44 414.52,139.76 414.61,139.07 414.70,138.38 414.79,137.69 414.88,137.00 414.97,136.31 415.06,135.63 415.15,134.94 415.24,134.25 415.33,133.56 415.41,132.88 415.50,132.19 415.59,131.50 415.68,130.82 415.77,130.13 415.86,129.45 415.95,128.76 416.04,128.08 416.12,127.39 416.21,126.71 416.30,126.02 416.39,125.34 416.48,124.65 416.57,123.97 416.66,123.28 416.75,122.60 416.83,121.91 416.92,121.23 417.01,120.54 417.10,119.86 417.19,119.17 417.28,118.49 417.37,117.81 417.46,117.12 417.55,116.44 417.64,115.75 417.73,115.07 417.82,114.38 417.91,113.70 418.00,113.01 418.09,112.33 418.18,111.64 418.27,110.96 418.36,110.27 418.45,109.59 418.54,108.90 418.63,108.22 418.72,107.53 418.81,106.84 418.90,106.16 418.99,105.47 419.09,104.78 419.18,104.10 419.27,103.41 419.36,102.72 419.45,102.04 419.55,101.35 419.64,100.66 419.73,99.97 419.83,99.28 419.92,98.59 420.01,97.90 420.11,97.21 420.20,96.52 420.29,95.83 420.39,95.14 420.48,94.45 420.58,93.76 420.67,93.07 420.77,92.38 420.87,91.68 420.96,90.99 421.06,90.30 421.15,89.60 421.25,88.91 421.35,88.21 421.45,87.52 421.54,86.82 421.64,86.13 421.74,85.43 421.84,84.73 421.94,84.03 422.04,83.33 422.14,82.64 422.24,81.94 422.34,81.24 422.44,80.53 422.54,79.83 422.64,79.13 422.74,78.43 422.85,77.73 422.95,77.02 423.05,76.32 423.15,75.61 423.26,74.91 423.36,74.20 423.47,73.49 423.57,72.79 423.68,72.08 423.78,71.37 423.89,70.66 424.00,69.95 424.10,69.24 424.21,68.52 424.32,67.81 424.43,67.10 424.54,66.38 424.65,65.67 424.76,64.95 424.87,64.23 424.98,63.52 425.09,62.80 425.20,62.08 425.31,61.36 425.42,60.64 425.54,59.91 425.65,59.19 425.77,58.47 425.89,57.76 426.02,57.05 426.15,56.35 426.29,55.66 426.45,54.98 426.61,54.32 426.79,53.68 426.99,53.06 427.20,52.46 427.43,51.89 427.68,51.34 427.96,50.83 428.25,50.34 428.57,49.89 428.92,49.49 429.28,49.15 429.65,48.89 430.03,48.74 430.41,48.73 430.78,48.86 431.14,49.16 431.48,49.61 431.82,50.19 432.14,50.86 432.44,51.62 432.74,52.42 433.02,53.25 433.30,54.09 433.56,54.90 433.82,55.66 434.07,56.36 434.31,57.01 434.54,57.62 434.76,58.21 434.98,58.80 435.19,59.41 435.39,60.03 435.59,60.66 435.78,61.31 435.97,61.96 436.16,62.62 436.34,63.28 436.52,63.96 436.70,64.63 436.87,65.31 437.05,65.99 437.22,66.67 437.39,67.35 437.56,68.03 437.73,68.71 437.90,69.39 438.07,70.07 438.23,70.75 438.40,71.44 438.57,72.12 438.73,72.80 438.89,73.48 439.06,74.16 439.22,74.85 439.38,75.53 439.54,76.21 439.70,76.90 439.85,77.58 440.01,78.26 440.17,78.95 440.32,79.63 440.48,80.32 440.63,81.00 440.79,81.68 440.94,82.37 441.09,83.05 441.24,83.74 441.39,84.42 441.54,85.11 441.69,85.79 441.84,86.48 441.99,87.17 442.13,87.85 442.28,88.54 442.43,89.22 442.57,89.91 442.71,90.60 442.86,91.28 443.00,91.97 443.14,92.66 443.28,93.34 443.42,94.03 443.56,94.72 443.70,95.41 443.84,96.09 443.98,96.78 444.12,97.47 444.25,98.16 444.39,98.84 444.53,99.53 444.66,100.22 444.80,100.91 444.93,101.60 445.07,102.29 445.20,102.97 445.33,103.66 445.46,104.35 445.59,105.04 445.73,105.73 445.86,106.42 445.99,107.11 446.12,107.80 446.25,108.49 446.37,109.18 446.50,109.86 446.63,110.55 446.76,111.24 446.89,111.93 447.01,112.62 447.14,113.31 447.26,114.00 447.39,114.69 447.51,115.38 447.64,116.07 447.76,116.76 447.89,117.45 448.01,118.14 448.13,118.83 448.26,119.52 448.38,120.21 448.50,120.90 448.62,121.59 448.75,122.28 448.87,122.97 448.99,123.66 449.11,124.35 449.23,125.04 449.35,125.73 449.47,126.42 449.59,127.12 449.71,127.81 449.83,128.50 449.95,129.19 450.07,129.88 450.18,130.57 450.30,131.26 450.42,131.95 450.54,132.64 450.66,133.33 450.77,134.02 450.89,134.71 451.01,135.40 451.13,136.09 451.24,136.78 451.36,137.47 451.48,138.16 451.59,138.85 451.71,139.54 451.83,140.23 451.94,140.92 452.06,141.61 452.17,142.30 452.29,142.99 452.40,143.68 452.52,144.37 452.63,145.06 452.75,145.75 452.86,146.44 452.98,147.13 453.09,147.82 453.20,148.52 453.32,149.21 453.43,149.90 453.54,150.59 453.66,151.28 453.77,151.97 453.88,152.66 454.00,153.35 454.11,154.04 454.22,154.73 454.33,155.42 454.45,156.11 454.56,156.80 454.67,157.49 454.78,158.18 454.90,158.87 455.01,159.56 455.12,160.25 455.23,160.94 455.34,161.63 455.45,162.32 455.56,163.01 455.68,163.70 455.79,164.39 455.90,165.08 456.01,165.77 456.12,166.46 456.23,167.15 456.34,167.84 456.45,168.53 456.56,169.22 456.67,169.91 456.78,170.60 456.89,171.29 457.00,171.99 457.11,172.68 457.22,173.37 457.33,174.06 457.44,174.75 457.55,175.44 457.66,176.13 457.77,176.82 457.88,177.51 457.99,178.20 458.10,178.89 458.21,179.58 458.32,180.27 458.43,180.96 458.53,181.65 458.64,182.34 458.75,183.03 458.86,183.72 458.97,184.41 459.08,185.10 459.19,185.79 459.30,186.48 459.41,187.17 459.52,187.86 459.62,188.55 459.73,189.24 459.84,189.93 459.95,190.62 460.06,191.31 460.17,192.00 460.28,192.69 460.38,193.38 460.49,194.07 460.60,194.76 460.71,195.45 460.82,196.14 460.93,196.83 461.04,197.52 461.14,198.22 461.25,198.91 461.36,199.60 461.47,200.29 461.58,200.98 461.69,201.67 461.80,202.36 461.91,203.05 462.01,203.74 462.12,204.43 462.23,205.12 462.34,205.81 462.45,206.50 462.56,207.19 462.67,207.88 462.78,208.57 462.88,209.26 462.99,209.95 463.10,210.64 463.21,211.33 463.32,212.02 463.43,212.71 463.54,213.40 463.65,214.09 463.76,214.78 463.87,215.47 463.98,216.16 464.09,216.85 464.20,217.54 464.31,218.23 464.41,218.92 464.52,219.61 464.63,220.30 464.74,220.99 464.85,221.68 464.96,222.37 465.07,223.06 465.18,223.75 465.30,224.44 465.41,225.13 465.52,225.82 465.63,226.52 465.74,227.21 465.85,227.90 465.96,228.59 466.07,229.28 466.18,229.97 466.29,230.66 466.40,231.35 466.51,232.04 466.63,232.73 466.74,233.42 466.85,234.11 466.96,234.80 467.07,235.49 467.19,236.18 467.30,236.87 467.41,237.56 467.52,238.25 467.64,238.94 467.75,239.63 467.86,240.32 467.97,241.01 468.09,241.70 468.20,242.39 468.31,243.08 468.43,243.77 468.54,244.46 468.65,245.15 468.77,245.84 468.88,246.53 469.00,247.22 469.11,247.91 469.23,248.60 469.34,249.29 469.46,249.98 469.57,250.67 469.69,251.36 469.80,252.05 469.92,252.74 470.03,253.43 470.15,254.13 470.27,254.82 470.38,255.51 470.50,256.20 470.62,256.89 470.73,257.58 470.85,258.27 470.97,258.96 471.08,259.65 471.20,260.34 471.32,261.03 471.44,261.72 471.56,262.41 471.68,263.10 471.79,263.79 471.91,264.48 472.03,265.17 472.15,265.86 472.27,266.55 472.39,267.24 472.51,267.93 472.63,268.62 472.75,269.31 472.87,270.00 472.99,270.69 473.11,271.38 473.24,272.07 473.36,272.76 473.48,273.45 473.60,274.14 473.72,274.83 473.85,275.52 473.97,276.21 474.09,276.90 474.22,277.59 474.34,278.28 474.46,278.97 474.59,279.67 474.71,280.36 474.84,281.05 474.96,281.74 475.09,282.43 475.21,283.12 475.34,283.81 475.46,284.50 475.59,285.19 475.72,285.88 475.84,286.57 475.97,287.26 476.10,287.95 476.23,288.64 476.35,289.33 476.48,290.02 476.61,290.71 476.74,291.40 476.87,292.09 477.00,292.78 477.13,293.47 477.26,294.16 477.39,294.85 477.52,295.54 477.65,296.23 477.78,296.92 477.91,297.61 478.04,298.30 478.17,298.99 478.30,299.68 478.43,300.37 478.56,301.06 478.69,301.75 478.82,302.45 478.96,303.14 479.09,303.83 479.22,304.52 479.35,305.21 479.48,305.90 479.61,306.59 479.74,307.28 479.87,307.97 480.00,308.66 480.14,309.35 480.27,310.04 480.40,310.73 480.53,311.42 480.66,312.11 480.79,312.80 480.92,313.49 481.05,314.18 481.18,314.87 481.31,315.56 481.44,316.25 481.57,316.94 481.70,317.63 481.83,318.32 481.96,319.01 482.09,319.70 482.22,320.39 482.35,321.09 482.47,321.78 482.60,322.47 482.73,323.16 482.86,323.85 482.98,324.54 483.11,325.23 483.24,325.92 483.36,326.61 483.49,327.30 483.61,327.99 483.74,328.68 483.86,329.37 483.99,330.06 484.11,330.75 484.24,331.44 484.36,332.13 484.48,332.82 484.60,333.51 484.73,334.20 484.85,334.89 484.97,335.58 485.09,336.28 485.21,336.97 485.33,337.66 485.45,338.35 485.56,339.04 485.68,339.73 485.80,340.42 485.91,341.11 486.03,341.80 486.15,342.49 486.26,343.18 486.37,343.87 486.49,344.56 486.60,345.25 486.71,345.94 486.82,346.63 486.94,347.32 487.05,348.01 487.15,348.71 487.26,349.40 487.37,350.09 487.48,350.78 487.59,351.47 487.69,352.16 487.80,352.85 487.90,353.54 488.00,354.23 488.11,354.92 488.21,355.61 488.31,356.30 488.41,356.99 488.51,357.68 488.61,358.37 488.71,359.07 488.80,359.76 488.90,360.45 488.99,361.14 489.09,361.83 489.18,362.52 489.28,363.21 489.37,363.90 489.46,364.59 489.55,365.28 489.64,365.97 489.73,366.66 489.82,367.35 489.91,368.05 490.00,368.74 490.09,369.43 490.18,370.12 490.27,370.81 490.35,371.50 490.44,372.19 490.53,372.88 490.61,373.57 490.70,374.26 490.79,374.95 490.87,375.65 490.96,376.34 491.04,377.03 491.13,377.72 491.21,378.41 491.30,379.10 491.38,379.79 491.46,380.48 491.55,381.17 491.63,381.86 491.72,382.55 491.80,383.25 491.89,383.94 491.97,384.63 492.06,385.32 492.14,386.01 492.23,386.70 492.31,387.39 492.40,388.08 492.48,388.77 492.57,389.47 492.65,390.16 492.74,390.85 492.83,391.54 492.91,392.23 493.00,392.92 493.09,393.61 493.18,394.30 493.26,394.99 493.35,395.69 493.44,396.38 493.53,397.07 493.62,397.76 493.71,398.45 493.80,399.14 493.89,399.83 493.98,400.52 494.07,401.22 494.16,401.91 494.25,402.60 494.35,403.29 494.44,403.98 494.53,404.67 494.62,405.36 494.72,406.05 494.81,406.75 494.90,407.44 495.00,408.13 495.09,408.82 495.19,409.51 495.28,410.20 495.38,410.89 495.47,411.59 495.57,412.28 495.67,412.97 495.76,413.66 495.86,414.35 495.96,415.04 496.06,415.73 496.16,416.43 496.26,417.12 496.36,417.81 496.46,418.50 496.56,419.19 496.66,419.88 496.76,420.58 496.86,421.27 496.96,421.96 497.06,422.65 497.17,423.34 497.27,424.03 497.37,424.73 497.48,425.42 497.58,426.11 497.68,426.80 497.79,427.49 497.90,428.18 498.00,428.88 498.11,429.57 498.21,430.26 498.32,430.95 498.43,431.64 498.54,432.34 498.65,433.03 498.75,433.72 498.86,434.41 498.97,435.10 499.08,435.79 499.20,436.49 499.31,437.18 499.42,437.87 499.53,438.56 499.64,439.25 499.76,439.95 499.87,440.64 499.98,441.33 500.10,442.02 500.21,442.71 500.33,443.41 500.44,444.10 500.56,444.79 500.68,445.48 500.80,446.17 500.91,446.87 501.03,447.56 501.15,448.25 501.27,448.94 501.39,449.63 501.51,450.33 501.63,451.02 501.75,451.71 501.87,452.40 501.99,453.09 502.11,453.79 502.23,454.48 502.36,455.17 502.48,455.86 502.60,456.55 502.73,457.24 502.85,457.94 502.97,458.63 503.10,459.32 503.22,460.01 503.35,460.70 503.47,461.39 503.60,462.08 503.73,462.78 503.85,463.47 503.98,464.16 504.11,464.85 504.23,465.54 504.36,466.23 504.49,466.92 504.62,467.61 504.75,468.30 504.88,468.99 505.01,469.68 505.13,470.37 505.26,471.06 505.39,471.76 505.52,472.45 505.65,473.14 505.79,473.83 505.92,474.52 506.05,475.20 506.18,475.89 506.31,476.58 506.44,477.27 506.57,477.96 506.71,478.65 506.84,479.34 506.97,480.03 507.10,480.72 507.24,481.41 507.37,482.10 507.50,482.78 507.64,483.47 507.77,484.16 507.91,484.85 508.04,485.54 508.17,486.23 508.31,486.91 508.44,487.60 508.58,488.29 508.71,488.97 508.85,489.66 508.98,490.35 509.12,491.04 509.25,491.72 509.39,492.41 509.53,493.10 509.66,493.78 509.80,494.47 509.93,495.15 510.07,495.84 510.20,496.52 510.34,497.21 510.48,497.89 510.61,498.58 510.75,499.26 510.89,499.95 511.02,500.63 511.16,501.32 511.30,502.00 511.43,502.69 511.57,503.37 511.71,504.05 511.84,504.74 511.98,505.42 512.12,506.10 512.25,506.78 512.39,507.47 512.53,508.15 512.66,508.83 512.80,509.51 512.94,510.19 513.08,510.87 513.21,511.56 513.35,512.24 513.50,512.91 513.64,513.59 513.80,514.27 513.95,514.94 514.12,515.62 514.29,516.29 514.47,516.96 514.66,517.63 514.86,518.29 515.07,518.95 515.29,519.61 515.52,520.26 515.77,520.92 516.03,521.56 516.31,522.21 516.60,522.85 516.91,523.49 517.23,524.12 517.57,524.76 517.92,525.39 518.28,526.02 518.65,526.65 519.04,527.28 519.44,527.90 519.85,528.53 520.27,529.16 520.70,529.78 521.14,530.37 521.58,530.91 522.03,531.36 522.48,531.70 522.92,531.92 523.36,531.97 523.79,531.85 524.21,531.55 524.61,531.10 525.00,530.55 525.37,529.92 525.72,529.25 526.04,528.58 526.34,527.90 526.62,527.23 526.87,526.55 527.11,525.87 527.32,525.19 527.52,524.51 527.70,523.82 527.87,523.14 528.02,522.45 528.16,521.76 528.28,521.08 528.39,520.39 528.49,519.70 528.58,519.01 528.66,518.31 528.74,517.62 528.81,516.93 528.87,516.23 528.93,515.54 528.98,514.85 529.03,514.15 529.09,513.46 529.14,512.76 529.19,512.06 529.24,511.37 529.29,510.67 529.34,509.98 529.40,509.28 529.45,508.59 529.51,507.89 529.56,507.19 529.62,506.50 529.68,505.80 529.74,505.10 529.79,504.41 529.85,503.71 529.91,503.01 529.97,502.32 530.03,501.62 530.09,500.92 530.15,500.23 530.21,499.53 530.28,498.83 530.34,498.13 530.40,497.44 530.47,496.74 530.53,496.04 530.59,495.34 530.66,494.64 530.72,493.95 530.79,493.25 530.85,492.55 530.92,491.85 530.99,491.15 531.05,490.46 531.12,489.76 531.19,489.06 531.25,488.36 531.32,487.66 531.39,486.96 531.46,486.27 531.53,485.57 531.59,484.87 531.66,484.17 531.73,483.47 531.80,482.77 531.87,482.07 531.94,481.37 532.01,480.68 532.07,479.98 532.14,479.28 532.21,478.58 532.28,477.88 532.35,477.18 532.42,476.48 532.49,475.78 532.56,475.08 532.63,474.39 532.70,473.69 532.77,472.99 532.83,472.29 532.90,471.59 532.97,470.89 533.04,470.19 533.11,469.49 533.18,468.79 533.25,468.09 533.31,467.39 533.38,466.70 533.45,466.00 533.52,465.30 533.58,464.60 533.65,463.90 533.72,463.20 533.78,462.50 533.85,461.80 533.91,461.10 533.98,460.40 534.04,459.71 534.11,459.01 534.17,458.31 534.24,457.61 534.30,456.91 534.36,456.21 534.43,455.51 534.49,454.81 534.55,454.11 534.61,453.42 534.67,452.72 534.73,452.02 534.79,451.32 534.85,450.62 534.91,449.92 534.97,449.23 535.03,448.53 535.08,447.83 535.14,447.13 535.20,446.43 535.25,445.74 535.31,445.04 535.36,444.34 535.42,443.64 535.47,442.94 535.52,442.25 535.58,441.55 535.63,440.85 535.68,440.15 535.73,439.46 535.78,438.76 535.83,438.06 535.88,437.36 535.93,436.67 535.98,435.97 536.03,435.27 536.08,434.57 536.13,433.88 536.18,433.18 536.23,432.48 536.27,431.79 536.32,431.09 536.37,430.39 536.41,429.69 536.46,429.00 536.50,428.30 536.55,427.60 536.60,426.91 536.64,426.21 536.69,425.51 536.73,424.82 536.77,424.12 536.82,423.42 536.86,422.73 536.91,422.03 536.95,421.33 536.99,420.64 537.03,419.94 537.08,419.24 537.12,418.55 537.16,417.85 537.20,417.15 537.25,416.46 537.29,415.76 537.33,415.06 537.37,414.37 537.41,413.67 537.46,412.98 537.50,412.28 537.54,411.58 537.58,410.89 537.62,410.19 537.66,409.49 537.70,408.80 537.74,408.10 537.79,407.41 537.83,406.71 537.87,406.01 537.91,405.32 537.95,404.62 537.99,403.93 538.03,403.23 538.07,402.53 538.11,401.84 538.16,401.14 538.20,400.44 538.24,399.75 538.28,399.05 538.32,398.36 538.36,397.66 538.40,396.96 538.45,396.27 538.49,395.57 538.53,394.88 538.57,394.18 538.61,393.48 538.66,392.79 538.70,392.09 538.74,391.40 538.78,390.70 538.83,390.00 538.87,389.31 538.91,388.61 538.96,387.92 539.00,387.22 539.05,386.52 539.09,385.83 539.13,385.13 539.18,384.44 539.22,383.74 539.27,383.04 539.32,382.35 539.36,381.65 539.41,380.96 539.45,380.26 539.50,379.56 539.55,378.87 539.60,378.17 539.64,377.47 539.69,376.78 539.74,376.08 539.79,375.39 539.84,374.69 539.89,373.99 539.94,373.30 539.99,372.60 540.04,371.90 540.09,371.21 540.14,370.51 540.20,369.81 540.25,369.12 540.30,368.42 540.35,367.73 540.41,367.03 540.46,366.33 540.52,365.64 540.57,364.94 540.63,364.24 540.69,363.55 540.74,362.85 540.80,362.15 540.86,361.46 540.92,360.76 540.98,360.06 541.04,359.37 541.10,358.67 541.16,357.97 541.22,357.27 541.28,356.58 541.34,355.88 541.41,355.18 541.47,354.49 541.53,353.79 541.60,353.09 541.66,352.40 541.73,351.70 541.79,351.00 541.86,350.30 541.92,349.61 541.99,348.91 542.06,348.21 542.12,347.51 542.19,346.82 542.26,346.12 542.33,345.42 542.40,344.72 542.46,344.03 542.53,343.33 542.60,342.63 542.67,341.93 542.74,341.23 542.81,340.54 542.88,339.84 542.95,339.14 543.02,338.44 543.09,337.74 543.16,337.05 543.23,336.35 543.30,335.65 543.37,334.95 543.44,334.25 543.51,333.55 543.59,332.85 543.66,332.16 543.73,331.46 543.80,330.76 543.87,330.06 543.94,329.36 544.01,328.66 544.08,327.96 544.15,327.26 544.22,326.56 544.29,325.87 544.36,325.17 544.43,324.47 544.50,323.77 544.57,323.07 544.64,322.37 544.71,321.67 544.78,320.97 544.85,320.27 544.92,319.57 544.99,318.87 545.06,318.17 545.12,317.47 545.19,316.77 545.26,316.07 545.33,315.37 545.39,314.67 545.46,313.97 545.53,313.27 545.59,312.57 545.66,311.87 545.72,311.17 545.79,310.46 545.85,309.76 545.91,309.06 545.98,308.36 546.04,307.66 546.10,306.96 546.17,306.26 546.23,305.56 546.29,304.86 546.35,304.15 546.41,303.45 546.47,302.75 546.53,302.05 546.59,301.35 546.65,300.65 546.71,299.95 546.77,299.25 546.83,298.54 546.89,297.84 546.94,297.14 547.00,296.44 547.06,295.74 547.12,295.04 547.17,294.34 547.23,293.64 547.29,292.94 547.34,292.24 547.40,291.54 547.46,290.84 547.51,290.14 547.57,289.44 547.63,288.75 547.68,288.05 547.74,287.35 547.79,286.65 547.85,285.95 547.90,285.26 547.96,284.56 548.02,283.86 548.07,283.17 548.13,282.47 548.18,281.77 548.24,281.08 548.29,280.38 548.35,279.69 548.40,278.99 548.46,278.30 548.51,277.61 548.57,276.91 548.63,276.22 548.68,275.53 548.74,274.84 548.79,274.14 548.85,273.45 548.91,272.76 548.96,272.07 549.02,271.38 549.08,270.69 549.13,270.01 549.19,269.32 549.25,268.63 549.30,267.94 549.36,267.26 549.42,266.57 549.48,265.89 549.54,265.20 549.60,264.52 549.65,263.83 549.71,263.15 549.77,262.47 549.83,261.79 549.89,261.11 549.95,260.43 550.01,259.75 550.07,259.07 550.14,258.39 550.20,257.71 550.26,257.04 550.32,256.36 550.39,255.68 550.45,255.01 550.51,254.34 550.58,253.66 550.64,252.99 550.71,252.32 550.77,251.65 550.84,250.98 550.90,250.31 550.97,249.64 551.04,248.97 551.11,248.31 551.18,247.64 551.25,246.97 551.32,246.31 551.39,245.64 551.47,244.97 551.54,244.30 551.62,243.63 551.70,242.96 551.79,242.28 551.87,241.60 551.96,240.92 552.05,240.23 552.15,239.55 552.25,238.85 552.35,238.16 552.46,237.45 552.57,236.75 552.68,236.04 552.80,235.32 552.93,234.60 553.06,233.87 553.19,233.13 553.33,232.39 553.48,231.64 553.63,230.88 553.79,230.11 553.95,229.34 554.12,228.56 554.30,227.77 554.48,226.97 554.67,226.16 554.87,225.34 555.07,224.51 555.28,223.67 555.50,222.84 555.73,222.02 555.97,221.24 556.22,220.51 556.47,219.84 556.73,219.25 557.00,218.75 557.28,218.36 557.58,218.09 557.88,217.96 558.19,217.98 558.50,218.14 558.83,218.44 559.16,218.85 559.49,219.37 559.83,219.97 560.16,220.65 560.49,221.38 560.81,222.15 561.12,222.94 561.43,223.75 561.72,224.55 562.00,225.32 562.27,226.08 562.52,226.80 562.77,227.51 563.00,228.21 563.23,228.89 563.46,229.56 563.68,230.22 563.90,230.88 564.11,231.53 564.33,232.19 564.56,232.86 564.79,233.53 565.02,234.21 565.27,234.91 565.52,235.63 565.78,236.35 566.06,237.05 566.34,237.72 566.63,238.33 566.93,238.88 567.23,239.32 567.54,239.65 567.85,239.85 568.16,239.90 568.48,239.82 568.80,239.62 569.12,239.30 569.44,238.88 569.76,238.36 570.08,237.75 570.39,237.07 570.70,236.33 571.01,235.53 571.31,234.68 571.61,233.79 571.90,232.89 572.18,231.96 572.45,231.03 572.72,230.10 572.97,229.18 573.21,228.29 573.45,227.41 573.67,226.56 573.88,225.72 574.08,224.91 574.28,224.11 574.46,223.33 574.64,222.56 574.81,221.81 574.97,221.07 575.13,220.35 575.28,219.64 575.42,218.94 575.56,218.26 575.69,217.58 575.81,216.91 575.93,216.25 576.05,215.60 576.16,214.95 576.27,214.31 576.38,213.68 576.48,213.05 576.59,212.42 576.68,211.79 576.78,211.17 576.88,210.55 576.98,209.92 577.07,209.30 577.17,208.67 577.26,208.04 577.36,207.41 577.46,206.77 577.55,206.13 577.65,205.49 577.75,204.85 577.85,204.20 577.94,203.55 578.04,202.90 578.14,202.24 578.24,201.59 578.34,200.93 578.44,200.27 578.54,199.60 578.64,198.94 578.74,198.27 578.85,197.60 578.95,196.93 579.05,196.25 579.15,195.58 579.26,194.90 579.36,194.22 579.46,193.54 579.56,192.86 579.67,192.17 579.77,191.49 579.88,190.80 579.98,190.11 580.08,189.42 580.19,188.72 580.29,188.03 580.40,187.34 580.50,186.64 580.61,185.94 580.72,185.24 580.82,184.54 580.93,183.84 581.03,183.14 581.14,182.44 581.25,181.74 581.35,181.03 581.46,180.33 581.56,179.62 581.67,178.91 581.78,178.21 581.88,177.50 581.99,176.79 582.10,176.08 582.21,175.37 582.31,174.66 582.42,173.95 582.53,173.24 582.63,172.53 582.74,171.82 582.85,171.11 582.95,170.40 583.06,169.69 583.17,168.98 583.28,168.27 583.38,167.56 583.49,166.85 583.60,166.14 583.70,165.44 583.81,164.73 583.92,164.02 584.02,163.31 584.13,162.60 584.24,161.90 584.34,161.19 584.45,160.49 584.55,159.78 584.66,159.08 584.77,158.38 584.87,157.67 584.98,156.97 585.08,156.27 585.19,155.57 585.29,154.88 585.40,154.18 585.50,153.48 585.61,152.79 585.71,152.09 585.82,151.40 585.92,150.70 586.03,150.01 586.13,149.32 586.23,148.62 586.34,147.93 586.44,147.24 586.54,146.55 586.65,145.86 586.75,145.17 586.85,144.48 586.96,143.79 587.06,143.11 587.16,142.42 587.27,141.73 587.37,141.04 587.47,140.36 587.57,139.67 587.67,138.98 587.78,138.30 587.88,137.61 587.98,136.93 588.08,136.24 588.18,135.56 588.28,134.87 588.39,134.19 588.49,133.51 588.59,132.82 588.69,132.14 588.79,131.45 588.89,130.77 588.99,130.09 589.09,129.40 589.19,128.72 589.29,128.03 589.39,127.35 589.49,126.67 589.59,125.98 589.69,125.30 589.79,124.61 589.89,123.93 589.99,123.24 590.09,122.56 590.18,121.87 590.28,121.19 590.38,120.50 590.48,119.82 590.58,119.13 590.68,118.44 590.78,117.76 590.87,117.07 590.97,116.38 591.07,115.69 591.17,115.00 591.26,114.31 591.36,113.62 591.46,112.93 591.56,112.24 591.65,111.55 591.75,110.86 591.85,110.17 591.94,109.47 592.04,108.78 592.14,108.09 592.23,107.39 592.33,106.70 592.42,106.00 592.52,105.30 592.62,104.60 592.71,103.91 592.81,103.21 592.90,102.51 593.00,101.80 593.09,101.10 593.19,100.40 593.28,99.70 593.38,98.99 593.47,98.28 593.57,97.58 593.66,96.87 593.76,96.16 593.85,95.45 593.95,94.74 594.04,94.04 594.13,93.33 594.23,92.62 594.32,91.91 594.41,91.20 594.51,90.49 594.60,89.78 594.69,89.07 594.79,88.36 594.88,87.65 594.97,86.94 595.07,86.23 595.16,85.52 595.25,84.82 595.34,84.11 595.44,83.41 595.53,82.70 595.62,82.00 595.71,81.30 595.80,80.60 595.90,79.90 595.99,79.21 596.08,78.51 596.17,77.82 596.26,77.13 596.35,76.44 596.44,75.75 596.53,75.06 596.63,74.38 596.72,73.70 596.81,73.02 596.90,72.34 596.99,71.67 597.08,71.00 597.17,70.33 597.26,69.67 597.35,69.00 597.44,68.34 597.53,67.69 597.62,67.03 597.71,66.38 597.80,65.74 597.89,65.09 597.98,64.45 598.07,63.80 598.17,63.16 598.27,62.50 598.37,61.84 598.48,61.17 598.60,60.49 598.72,59.80 598.85,59.10 599.00,58.37 599.15,57.63 599.31,56.87 599.49,56.08 599.68,55.27 599.88,54.44 600.09,53.58 600.33,52.72 600.58,51.88 600.84,51.12 601.13,50.45 601.43,49.90 601.75,49.51 602.09,49.28 602.43,49.23 602.77,49.37 603.11,49.67 603.45,50.07 603.78,50.51 604.10,50.98 604.41,51.47 604.72,51.98 605.01,52.52 605.30,53.07 605.58,53.65 605.85,54.24 606.11,54.85 606.37,55.47 606.62,56.10 606.87,56.75 607.11,57.41 607.35,58.07 607.59,58.74 607.81,59.42 608.04,60.10 608.26,60.79 608.48,61.47 608.70,62.16 608.91,62.84 609.12,63.53 609.33,64.21 609.54,64.90 609.74,65.59 609.94,66.27 610.14,66.96 610.34,67.64 610.53,68.33 610.72,69.02 610.91,69.70 611.10,70.39 611.29,71.07 611.47,71.76 611.65,72.45 611.83,73.13 612.01,73.82 612.18,74.51 612.36,75.19 612.53,75.88 612.70,76.57 612.87,77.25 613.03,77.94 613.20,78.63 613.36,79.31 613.52,80.00 613.68,80.69 613.84,81.37 614.00,82.06 614.15,82.75 614.31,83.43 614.46,84.12 614.61,84.81 614.76,85.49 614.91,86.18 615.06,86.87 615.20,87.55 615.35,88.24 615.49,88.93 615.63,89.62 615.78,90.30 615.92,90.99 616.06,91.68 616.19,92.37 616.33,93.05 616.47,93.74 616.60,94.43 616.74,95.11 616.87,95.80 617.01,96.49 617.14,97.18 617.27,97.86 617.41,98.55 617.54,99.24 617.67,99.93 617.80,100.62 617.93,101.30 618.06,101.99 618.19,102.68 618.31,103.37 618.44,104.05 618.57,104.74 618.70,105.43 618.83,106.12 618.95,106.81 619.08,107.49 619.21,108.18 619.33,108.87 619.46,109.56 619.58,110.25 619.71,110.93 619.83,111.62 619.96,112.31 620.08,113.00 620.21,113.69 620.33,114.37 620.46,115.06 620.58,115.75 620.70,116.44 620.83,117.13 620.95,117.82 621.07,118.50 621.19,119.19 621.31,119.88 621.44,120.57 621.56,121.26 621.68,121.95 621.80,122.64 621.92,123.32 622.04,124.01 622.16,124.70 622.28,125.39 622.40,126.08 622.52,126.77 622.64,127.46 622.76,128.14 622.88,128.83 623.00,129.52 623.12,130.21 623.23,130.90 623.35,131.59 623.47,132.28 623.59,132.97 623.71,133.66 623.82,134.34 623.94,135.03 624.06,135.72 624.17,136.41 624.29,137.10 624.41,137.79 624.52,138.48 624.64,139.17 624.75,139.86 624.87,140.55 624.99,141.23 625.10,141.92 625.22,142.61 625.33,143.30 625.45,143.99 625.56,144.68 625.68,145.37 625.79,146.06 625.90,146.75 626.02,147.44 626.13,148.13 626.25,148.82 626.36,149.51 626.47,150.20 626.59,150.88 626.70,151.57 626.81,152.26 626.93,152.95 627.04,153.64 627.15,154.33 627.27,155.02 627.38,155.71 627.49,156.40 627.60,157.09 627.72,157.78 627.83,158.47 627.94,159.16 628.05,159.85 628.16,160.54 628.27,161.23 628.39,161.92 628.50,162.61 628.61,163.30 628.72,163.99 628.83,164.68 628.94,165.37 629.06,166.06 629.17,166.75 629.28,167.44 629.39,168.13 629.50,168.82 629.61,169.51 629.72,170.19 629.83,170.88 629.94,171.57 630.05,172.26 630.16,172.95 630.27,173.64 630.38,174.33 630.50,175.02 630.61,175.71 630.72,176.40 630.83,177.09 630.94,177.78 631.05,178.47 631.16,179.16 631.27,179.85 631.38,180.54 631.49,181.23 631.60,181.92 631.71,182.61 631.82,183.30 631.93,183.99 632.04,184.68 632.15,185.37 632.26,186.07 632.37,186.76 632.48,187.45 632.59,188.14 632.70,188.83 632.81,189.52 632.92,190.21 633.03,190.90 633.14,191.59 633.25,192.28 633.36,192.97 633.47,193.66 633.58,194.35 633.69,195.04 633.80,195.73 633.92,196.42 634.03,197.11 634.14,197.80 634.25,198.49 634.36,199.18 634.47,199.87 634.58,200.56 634.69,201.25 634.80,201.94 634.91,202.63 635.02,203.32 635.14,204.01 635.25,204.70 635.36,205.39 635.47,206.08 635.58,206.77 635.69,207.46 635.80,208.15 635.92,208.84 636.03,209.53 636.14,210.22 636.25,210.91 636.36,211.61 636.48,212.30 636.59,212.99 636.70,213.68 636.81,214.37 636.93,215.06 637.04,215.75 637.15,216.44 637.26,217.13 637.38,217.82 637.49,218.51 637.60,219.20 637.72,219.89 637.83,220.58 637.94,221.27 638.06,221.96 638.17,222.65 638.28,223.34 638.40,224.03 638.51,224.72 638.62,225.41 638.74,226.10 638.85,226.79 638.97,227.48 639.08,228.17 639.20,228.87 639.31,229.56 639.42,230.25 639.54,230.94 639.65,231.63 639.77,232.32 639.88,233.01 640.00,233.70 640.11,234.39 640.23,235.08 640.34,235.77 640.46,236.46 640.57,237.15 640.69,237.84 640.80,238.53 640.92,239.22 641.03,239.91 641.15,240.60 641.27,241.29 641.38,241.98 641.50,242.67 641.61,243.36 641.73,244.05 641.85,244.75 641.96,245.44 642.08,246.13 642.19,246.82 642.31,247.51 642.43,248.20 642.54,248.89 642.66,249.58 642.78,250.27 642.89,250.96 643.01,251.65 643.13,252.34 643.24,253.03 643.36,253.72 643.48,254.41 643.59,255.10 643.71,255.79 643.83,256.48 643.95,257.17 644.06,257.86 644.18,258.55 644.30,259.24 644.42,259.93 644.53,260.62 644.65,261.31 644.77,262.00 644.89,262.69 645.00,263.38 645.12,264.08 645.24,264.77 645.36,265.46 645.48,266.15 645.59,266.84 645.71,267.53 645.83,268.22 645.95,268.91 646.07,269.60 646.19,270.29 646.30,270.98 646.42,271.67 646.54,272.36 646.66,273.05 646.78,273.74 646.90,274.43 647.02,275.12 647.14,275.81 647.26,276.50 647.37,277.19 647.49,277.88 647.61,278.57 647.73,279.26 647.85,279.95 647.97,280.64 648.09,281.33 648.21,282.02 648.33,282.71 648.45,283.40 648.57,284.09 648.69,284.78 648.81,285.47 648.93,286.16 649.05,286.85 649.17,287.54 649.29,288.23 649.41,288.92 649.53,289.61 649.65,290.30 649.77,290.99 649.89,291.68 650.01,292.37 650.13,293.06 650.25,293.75 650.37,294.44 650.49,295.13 650.61,295.82 650.73,296.51 650.85,297.20 650.97,297.89 651.09,298.58 651.21,299.27 651.33,299.96 651.45,300.65 651.57,301.34 651.69,302.03 651.81,302.72 651.94,303.41 652.06,304.10 652.18,304.79 652.30,305.48 652.42,306.17 652.54,306.86 652.66,307.55 652.78,308.24 652.90,308.93 653.03,309.62 653.15,310.30 653.27,310.99 653.39,311.68 653.51,312.37 653.63,313.06 653.75,313.75 653.88,314.44 654.00,315.13 654.12,315.82 654.24,316.51 654.36,317.20 654.48,317.89 654.60,318.58 654.73,319.27 654.85,319.96 654.97,320.65 655.09,321.34 655.22,322.03 655.34,322.72 655.46,323.40 655.59,324.09 655.71,324.78 655.84,325.47 655.96,326.16 656.09,326.85 656.22,327.54 656.34,328.23 656.47,328.92 656.60,329.61 656.73,330.30 656.86,330.99 657.00,331.67 657.13,332.36 657.26,333.05 657.40,333.74 657.53,334.43 657.67,335.12 657.81,335.81 657.95,336.50 658.09,337.19 658.23,337.88 658.38,338.56 658.52,339.25 658.67,339.94 658.82,340.63 658.97,341.32 659.12,342.01 659.27,342.70 659.43,343.39 659.58,344.07 659.74,344.76 659.90,345.45 660.06,346.14 660.23,346.83 660.40,347.52 660.56,348.21 660.73,348.90 660.91,349.58 661.08,350.27 661.26,350.96 661.43,351.65 661.61,352.34 661.79,353.03 661.96,353.72 662.13,354.40 662.29,355.09 662.45,355.78 662.60,356.47 662.75,357.16 662.88,357.85 663.01,358.53 663.13,359.22 663.23,359.91 663.33,360.60 663.42,361.29 663.51,361.97 663.59,362.66 663.66,363.35 663.73,364.04 663.79,364.73 663.85,365.41 663.91,366.10 663.96,366.79 664.01,367.48 664.06,368.17 664.11,368.85 664.16,369.54 664.21,370.23 664.27,370.92 664.32,371.61 664.38,372.29 664.44,372.98 664.50,373.67 664.56,374.36 664.63,375.04 664.69,375.73 664.76,376.42 664.83,377.11 664.91,377.79 664.98,378.48 665.06,379.17 665.14,379.86 665.22,380.54 665.30,381.23 665.39,381.92 665.47,382.61 665.56,383.29 665.65,383.98 665.74,384.67 665.83,385.36 665.93,386.04 666.02,386.73 666.12,387.42 666.22,388.10 666.32,388.79 666.42,389.48 666.52,390.17 666.63,390.85 666.73,391.54 666.84,392.23 666.95,392.91 667.06,393.60 667.17,394.29 667.28,394.97 667.40,395.66 667.51,396.35 667.62,397.03 667.74,397.72 667.86,398.41 667.98,399.09 668.10,399.78 668.22,400.47 668.34,401.15 668.46,401.84 668.58,402.53 668.71,403.21 668.83,403.90 668.96,404.59 669.08,405.27 669.21,405.96 669.34,406.65 669.47,407.33 669.60,408.02 669.73,408.70 669.86,409.39 669.99,410.08 670.12,410.76 670.25,411.45 670.38,412.14 670.51,412.82 670.64,413.51 670.78,414.19 670.91,414.88 671.05,415.56 671.18,416.25 671.32,416.94 671.45,417.62 671.59,418.31 671.72,418.99 671.86,419.68 672.00,420.37 672.13,421.05 672.27,421.74 672.41,422.42 672.55,423.11 672.69,423.79 672.83,424.48 672.97,425.16 673.11,425.85 673.25,426.54 673.39,427.22 673.53,427.91 673.67,428.59 673.81,429.28 673.95,429.96 674.10,430.65 674.24,431.33 674.38,432.02 674.53,432.70 674.67,433.39 674.81,434.07 674.96,434.76 675.10,435.45 675.24,436.13 675.39,436.82 675.53,437.50 675.68,438.19 675.82,438.87 675.97,439.56 676.12,440.24 676.26,440.93 676.41,441.61 676.55,442.30 676.70,442.98 676.85,443.67 676.99,444.35 677.14,445.04 677.29,445.72 677.43,446.41 677.58,447.09 677.73,447.78 677.88,448.46 678.02,449.15 678.17,449.84 678.32,450.52 678.47,451.21 678.62,451.89 678.76,452.58 678.91,453.26 679.06,453.95 679.21,454.63 679.36,455.32 679.50,456.00 679.65,456.69 679.80,457.37 679.95,458.06 680.10,458.74 680.25,459.43 680.40,460.11 680.54,460.80 680.69,461.48 680.84,462.17 680.99,462.85 681.14,463.54 681.29,464.23 681.43,464.91 681.58,465.60 681.73,466.28 681.88,466.97 682.03,467.65 682.18,468.34 682.32,469.02 682.47,469.71 682.62,470.39 682.77,471.08 682.91,471.77 683.06,472.45 683.21,473.14 683.36,473.82 683.50,474.51 683.65,475.19 683.80,475.88 683.94,476.56 684.09,477.25 684.24,477.94 684.38,478.62 684.53,479.31 684.67,479.99 684.82,480.68 684.96,481.36 685.11,482.05 685.25,482.74 685.40,483.42 685.54,484.11 685.69,484.79 685.83,485.48 685.97,486.17 686.12,486.85 686.26,487.54 686.40,488.22 686.54,488.91 686.69,489.60 686.83,490.28 686.97,490.97 687.11,491.66 687.25,492.34 687.40,493.03 687.54,493.72 687.68,494.40 687.82,495.09 687.97,495.78 688.11,496.46 688.26,497.15 688.40,497.84 688.55,498.52 688.70,499.21 688.85,499.90 689.01,500.58 689.16,501.27 689.32,501.96 689.48,502.64 689.64,503.33 689.80,504.02 689.97,504.70 690.14,505.39 690.31,506.08 690.48,506.77 690.66,507.45 690.84,508.14 691.02,508.83 691.21,509.52 691.40,510.20 691.59,510.89 691.79,511.58 692.00,512.27 692.20,512.95 692.41,513.64 692.63,514.33 692.85,515.02 693.07,515.71 693.30,516.39 693.54,517.08 693.78,517.77 694.02,518.46 694.27,519.15 694.53,519.84 694.79,520.52 695.06,521.21 695.33,521.89 695.62,522.56 695.92,523.22 696.23,523.87 696.55,524.50 696.89,525.11 697.24,525.71 697.61,526.28 698.00,526.83 698.41,527.34 698.84,527.83 699.29,528.29 699.76,528.70 700.26,529.09 700.79,529.43 701.33,529.72 701.89,529.98 702.46,530.18 703.04,530.34 703.62,530.44 704.20,530.49 704.77,530.47 705.32,530.40 705.85,530.27 706.37,530.07 706.85,529.82 707.31,529.51 707.74,529.14 708.13,528.73 708.48,528.26 708.78,527.76 709.05,527.21 709.28,526.62 709.47,525.99 709.64,525.33 709.78,524.64 709.89,523.92 709.99,523.18 710.06,522.41 710.13,521.63 710.19,520.82 710.24,520.01 710.28,519.18 710.33,518.34 710.38,517.50 710.42,516.66 710.46,515.82 710.51,514.98 710.55,514.14 710.60,513.32 710.65,512.50 710.69,511.70 710.74,510.92 710.80,510.15 710.85,509.41 710.91,508.70 710.97,508.01 711.04,507.36 711.11,506.74 711.19,506.15 711.27,505.61 711.35,505.11 711.45,504.65 711.52,504.36" fill="none" stroke="#b00000" stroke-width="1.3" stroke-linejoin="round"/>
</svg>
<div style="position:absolute;left:0;top:572px;width:800px;height:13px;">
<svg width="800" height="14" style="left:0;top:0"><text x="1" y="11" font-family="Liberation Mono" font-size="13.33" fill="#000" xml:space="preserve">BASE     852.27 SEC(TBF)   -801.97 SEC(TM)  51.5 %EOF T: 2.00 SEC/DIV</text></svg>
</div>
<div style="position:absolute;left:0;top:585px;width:800px;height:15px;background-color:#fff;background-image:repeating-conic-gradient(#d4d0c8 0 25%,#fff 0 50%);background-size:2px 2px;"></div>
<div style="position:absolute;left:0;top:598px;width:800px;height:2px;background:#d4d0c8;"></div>
<div style="position:absolute;left:0;top:585px;width:88px;height:15px;background:#fff;"></div>
<div style="position:absolute;left:0;top:585px;width:88px;height:1px;background:#000;"></div>
<div style="position:absolute;left:0;top:589px;width:88px;height:1px;background:#000;"></div>
<div style="position:absolute;left:88px;top:585px;width:15px;height:13px;background:#d4d0c8;border-top:1px solid #fff;border-left:2px solid #fff;box-sizing:border-box;"></div>
<div style="position:absolute;left:103px;top:585px;width:1px;height:13px;background:#404040;"></div>
<div style="position:absolute;left:456px;top:585px;width:14px;height:13px;background:#d4d0c8;border-top:1px solid #fff;border-left:1px solid #fff;box-sizing:border-box;"></div>
<div style="position:absolute;left:470px;top:585px;width:1px;height:13px;background:#404040;"></div>
<div style="position:absolute;left:786px;top:585px;width:14px;height:13px;background:#d4d0c8;border-top:1px solid #fff;border-left:1px solid #fff;box-sizing:border-box;"></div>
<div style="position:absolute;left:799px;top:585px;width:1px;height:13px;background:#404040;"></div>
<svg width="800" height="600" style="left:0;top:0">
<path d="M93 592.5L97 588.5V596.5Z" fill="#000"/>
<path d="M795 592.5L791 588.5V596.5Z" fill="#000"/>
</svg>
</body></html>
